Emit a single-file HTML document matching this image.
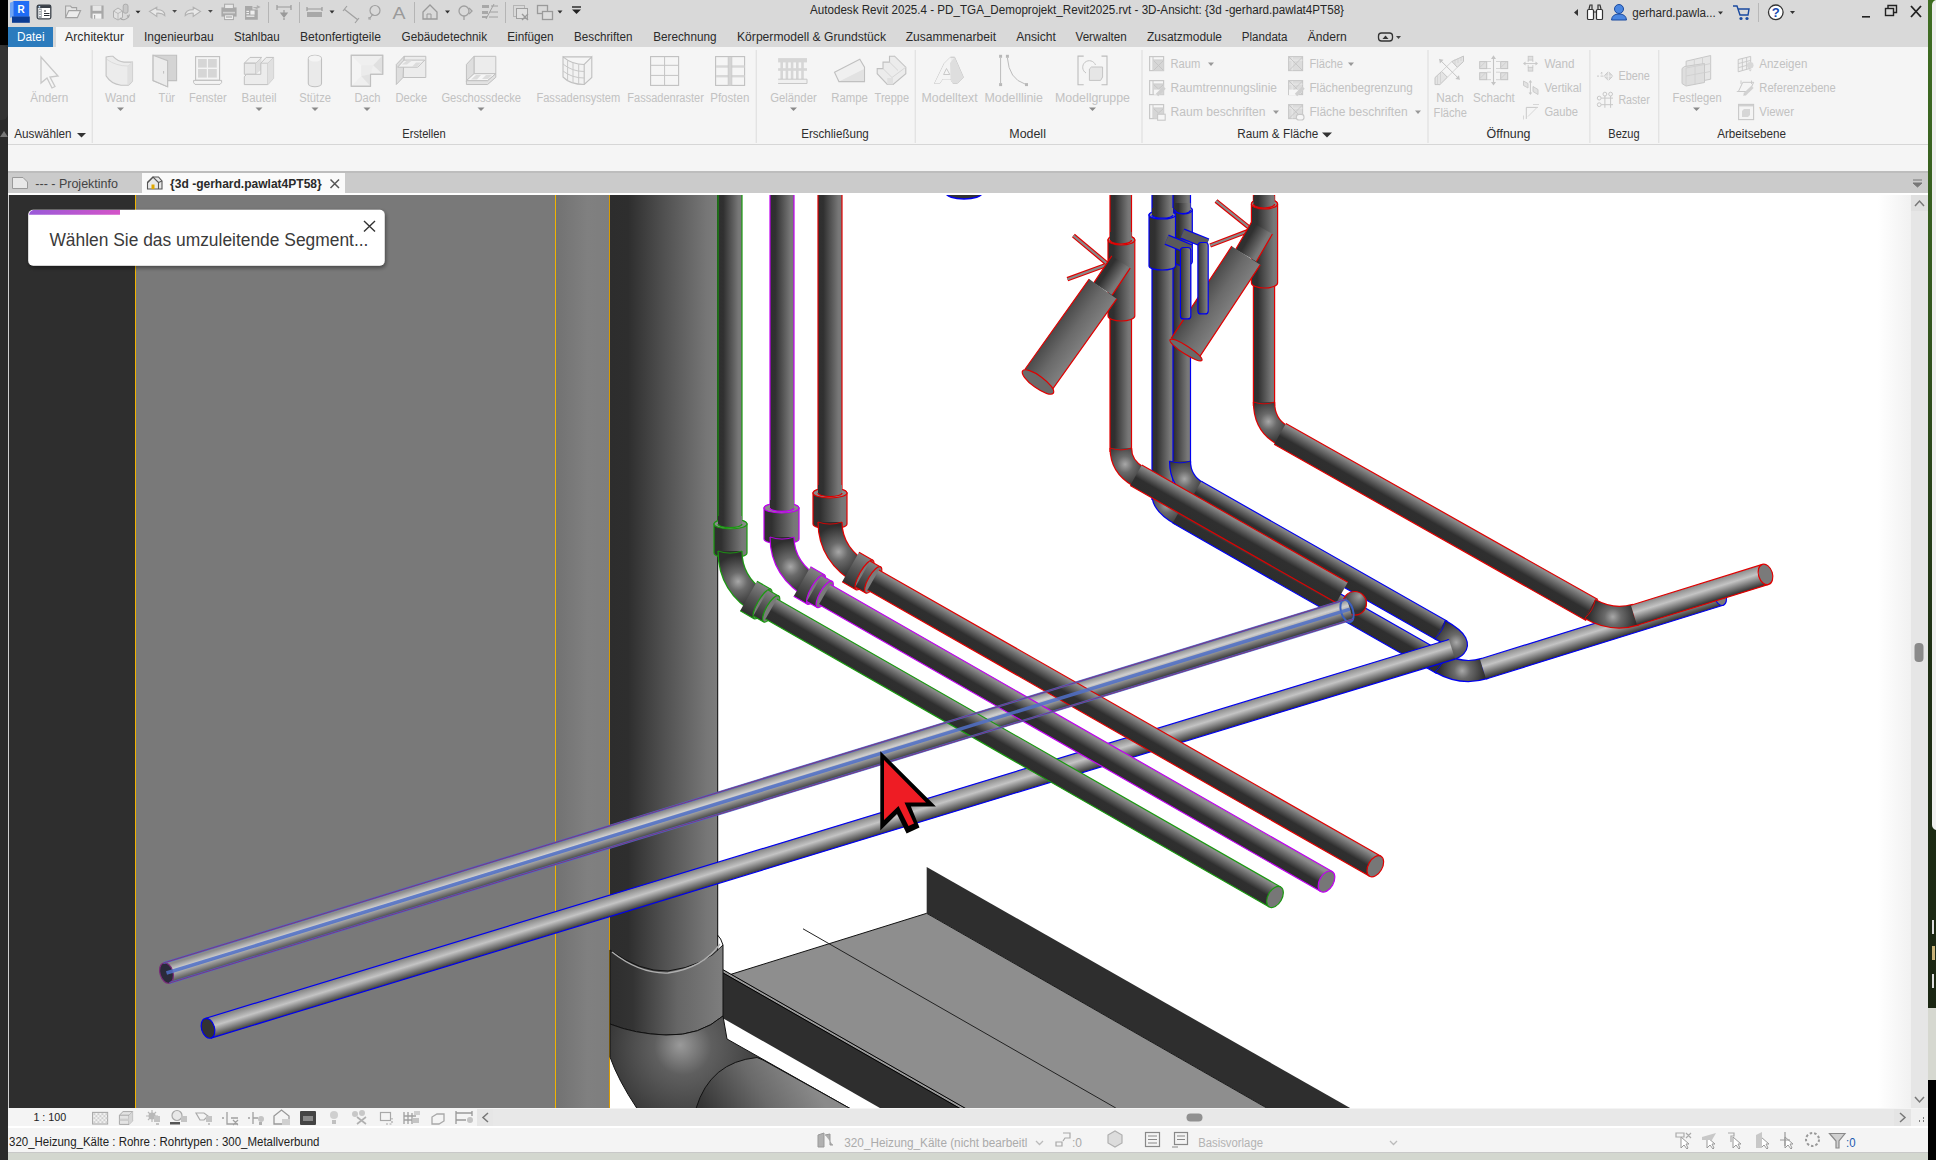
<!DOCTYPE html><html><head><meta charset="utf-8"><title>Revit</title><style>html,body{margin:0;padding:0;width:1936px;height:1160px;overflow:hidden;background:#000;}svg{display:block;font-family:"Liberation Sans",sans-serif;}</style></head><body><svg width="1936" height="1160" viewBox="0 0 1936 1160" font-family="Liberation Sans, sans-serif"><defs><linearGradient id="lg1" gradientUnits="userSpaceOnUse" x1="0.0" y1="0.0" x2="0.0" y2="1080.0"><stop offset="0" stop-color="#3f6e22"/><stop offset="0.3" stop-color="#33561e"/><stop offset="0.6" stop-color="#1f3014"/><stop offset="1" stop-color="#1a2412"/></linearGradient><clipPath id="vp"><rect x="9" y="195" width="1902" height="913"/></clipPath><linearGradient id="lg2" gradientUnits="userSpaceOnUse" x1="1878.0" y1="0.0" x2="1911.0" y2="0.0"><stop offset="0" stop-color="#ffffff"/><stop offset="1" stop-color="#f1f1f1"/></linearGradient><linearGradient id="lg3" gradientUnits="userSpaceOnUse" x1="556.0" y1="0.0" x2="609.0" y2="0.0"><stop offset="0" stop-color="#727272"/><stop offset="0.6" stop-color="#808080"/><stop offset="1" stop-color="#7e7e7e"/></linearGradient><linearGradient id="lg4" gradientUnits="userSpaceOnUse" x1="610.0" y1="0.0" x2="717.0" y2="0.0"><stop offset="0" stop-color="#2d2d2d"/><stop offset="0.17" stop-color="#2e2e2e"/><stop offset="0.5" stop-color="#505050"/><stop offset="0.9" stop-color="#767676"/><stop offset="1" stop-color="#7c7c7c"/></linearGradient><linearGradient id="lg5" gradientUnits="userSpaceOnUse" x1="610.0" y1="0.0" x2="723.0" y2="0.0"><stop offset="0" stop-color="#2e2e2e"/><stop offset="0.2" stop-color="#333333"/><stop offset="0.6" stop-color="#666666"/><stop offset="1" stop-color="#7e7e7e"/></linearGradient><radialGradient id="rg6" gradientUnits="userSpaceOnUse" cx="690.0" cy="1050.0" r="95.0" fx="680.0" fy="1045.0"><stop offset="0" stop-color="#9a9a9a"/><stop offset="0.3" stop-color="#5f5f5f"/><stop offset="1" stop-color="#2e2e2e"/></radialGradient><linearGradient id="lg7" gradientUnits="userSpaceOnUse" x1="700.0" y1="1108.0" x2="790.0" y2="1050.0"><stop offset="0" stop-color="#333333"/><stop offset="0.55" stop-color="#6a6a6a"/><stop offset="1" stop-color="#8a8a8a"/></linearGradient><linearGradient id="lg8" gradientUnits="userSpaceOnUse" x1="1169.5" y1="190.0" x2="1190.5" y2="190.0"><stop offset="0" stop-color="#2f2f2f"/><stop offset="0.22" stop-color="#303030"/><stop offset="0.85" stop-color="#777777"/><stop offset="1" stop-color="#7a7a7a"/></linearGradient><linearGradient id="lg9" gradientUnits="userSpaceOnUse" x1="1152.0" y1="190.0" x2="1173.0" y2="190.0"><stop offset="0" stop-color="#2f2f2f"/><stop offset="0.22" stop-color="#303030"/><stop offset="0.85" stop-color="#777777"/><stop offset="1" stop-color="#7a7a7a"/></linearGradient><linearGradient id="lg10" gradientUnits="userSpaceOnUse" x1="1175.0" y1="0.0" x2="1192.3" y2="0.0"><stop offset="0" stop-color="#2f2f2f"/><stop offset="0.22" stop-color="#303030"/><stop offset="0.85" stop-color="#777777"/><stop offset="1" stop-color="#7a7a7a"/></linearGradient><linearGradient id="lg11" gradientUnits="userSpaceOnUse" x1="1175.0" y1="0.0" x2="1190.5" y2="0.0"><stop offset="0" stop-color="#2f2f2f"/><stop offset="0.22" stop-color="#303030"/><stop offset="0.85" stop-color="#777777"/><stop offset="1" stop-color="#7a7a7a"/></linearGradient><linearGradient id="lg12" gradientUnits="userSpaceOnUse" x1="1149.0" y1="0.0" x2="1175.5" y2="0.0"><stop offset="0" stop-color="#2f2f2f"/><stop offset="0.22" stop-color="#303030"/><stop offset="0.85" stop-color="#777777"/><stop offset="1" stop-color="#7a7a7a"/></linearGradient><linearGradient id="lg13" gradientUnits="userSpaceOnUse" x1="1152.0" y1="0.0" x2="1173.0" y2="0.0"><stop offset="0" stop-color="#2f2f2f"/><stop offset="0.22" stop-color="#303030"/><stop offset="0.85" stop-color="#777777"/><stop offset="1" stop-color="#7a7a7a"/></linearGradient><radialGradient id="rg14" gradientUnits="userSpaceOnUse" cx="1166.9" cy="504.9" r="23.1"><stop offset="0" stop-color="#a8a8a8"/><stop offset="0.35" stop-color="#6a6a6a"/><stop offset="1" stop-color="#2e2e2e"/></radialGradient><linearGradient id="lg15" gradientUnits="userSpaceOnUse" x1="1172.7" y1="523.1" x2="1183.3" y2="504.3"><stop offset="0" stop-color="#2e2e2e"/><stop offset="0.42" stop-color="#2f2f2f"/><stop offset="0.95" stop-color="#8c8c8c"/><stop offset="1" stop-color="#8e8e8e"/></linearGradient><radialGradient id="rg16" gradientUnits="userSpaceOnUse" cx="1462.2" cy="670.7" r="23.1"><stop offset="0" stop-color="#a8a8a8"/><stop offset="0.35" stop-color="#6a6a6a"/><stop offset="1" stop-color="#2e2e2e"/></radialGradient><linearGradient id="lg17" gradientUnits="userSpaceOnUse" x1="1486.1" y1="679.0" x2="1479.9" y2="659.0"><stop offset="0" stop-color="#2e2e2e"/><stop offset="0.38" stop-color="#8a8a8a"/><stop offset="0.62" stop-color="#c4c4c4"/><stop offset="1" stop-color="#8a8a8a"/></linearGradient><radialGradient id="rg18" gradientUnits="userSpaceOnUse" cx="1184.5" cy="479.0" r="23.1"><stop offset="0" stop-color="#a8a8a8"/><stop offset="0.35" stop-color="#6a6a6a"/><stop offset="1" stop-color="#2e2e2e"/></radialGradient><linearGradient id="lg19" gradientUnits="userSpaceOnUse" x1="1190.7" y1="500.1" x2="1201.3" y2="481.3"><stop offset="0" stop-color="#2e2e2e"/><stop offset="0.42" stop-color="#2f2f2f"/><stop offset="0.95" stop-color="#8c8c8c"/><stop offset="1" stop-color="#8e8e8e"/></linearGradient><radialGradient id="rg20" gradientUnits="userSpaceOnUse" cx="1456.3" cy="642.4" r="23.1"><stop offset="0" stop-color="#a8a8a8"/><stop offset="0.35" stop-color="#6a6a6a"/><stop offset="1" stop-color="#2e2e2e"/></radialGradient><linearGradient id="lg21" gradientUnits="userSpaceOnUse" x1="1455.0" y1="659.1" x2="1449.0" y2="639.5"><stop offset="0" stop-color="#2e2e2e"/><stop offset="0.38" stop-color="#8a8a8a"/><stop offset="0.62" stop-color="#c4c4c4"/><stop offset="1" stop-color="#8a8a8a"/></linearGradient><linearGradient id="lg22" gradientUnits="userSpaceOnUse" x1="1110.0" y1="190.0" x2="1131.5" y2="190.0"><stop offset="0" stop-color="#2f2f2f"/><stop offset="0.22" stop-color="#303030"/><stop offset="0.85" stop-color="#777777"/><stop offset="1" stop-color="#7a7a7a"/></linearGradient><linearGradient id="lg23" gradientUnits="userSpaceOnUse" x1="1108.0" y1="0.0" x2="1134.8" y2="0.0"><stop offset="0" stop-color="#2f2f2f"/><stop offset="0.22" stop-color="#303030"/><stop offset="0.85" stop-color="#777777"/><stop offset="1" stop-color="#7a7a7a"/></linearGradient><linearGradient id="lg24" gradientUnits="userSpaceOnUse" x1="1110.0" y1="0.0" x2="1131.5" y2="0.0"><stop offset="0" stop-color="#2f2f2f"/><stop offset="0.22" stop-color="#303030"/><stop offset="0.85" stop-color="#777777"/><stop offset="1" stop-color="#7a7a7a"/></linearGradient><linearGradient id="lg25" gradientUnits="userSpaceOnUse" x1="1111.8" y1="255.9" x2="1130.2" y2="268.1"><stop offset="0" stop-color="#2f2f2f"/><stop offset="0.22" stop-color="#303030"/><stop offset="0.85" stop-color="#777777"/><stop offset="1" stop-color="#7a7a7a"/></linearGradient><linearGradient id="lg26" gradientUnits="userSpaceOnUse" x1="1089.2" y1="279.1" x2="1116.8" y2="298.9"><stop offset="0" stop-color="#4a4a4a"/><stop offset="0.5" stop-color="#6a6a6a"/><stop offset="1" stop-color="#808080"/></linearGradient><radialGradient id="rg27" gradientUnits="userSpaceOnUse" cx="1125.1" cy="464.3" r="23.7"><stop offset="0" stop-color="#a8a8a8"/><stop offset="0.35" stop-color="#6a6a6a"/><stop offset="1" stop-color="#2e2e2e"/></radialGradient><linearGradient id="lg28" gradientUnits="userSpaceOnUse" x1="1130.2" y1="485.4" x2="1141.8" y2="464.9"><stop offset="0" stop-color="#2e2e2e"/><stop offset="0.42" stop-color="#2f2f2f"/><stop offset="0.95" stop-color="#8c8c8c"/><stop offset="1" stop-color="#8e8e8e"/></linearGradient><linearGradient id="lg29" gradientUnits="userSpaceOnUse" x1="1253.4" y1="190.0" x2="1274.6" y2="190.0"><stop offset="0" stop-color="#2f2f2f"/><stop offset="0.22" stop-color="#303030"/><stop offset="0.85" stop-color="#777777"/><stop offset="1" stop-color="#7a7a7a"/></linearGradient><linearGradient id="lg30" gradientUnits="userSpaceOnUse" x1="1251.4" y1="0.0" x2="1277.6" y2="0.0"><stop offset="0" stop-color="#2f2f2f"/><stop offset="0.22" stop-color="#303030"/><stop offset="0.85" stop-color="#777777"/><stop offset="1" stop-color="#7a7a7a"/></linearGradient><linearGradient id="lg31" gradientUnits="userSpaceOnUse" x1="1253.4" y1="0.0" x2="1274.6" y2="0.0"><stop offset="0" stop-color="#2f2f2f"/><stop offset="0.22" stop-color="#303030"/><stop offset="0.85" stop-color="#777777"/><stop offset="1" stop-color="#7a7a7a"/></linearGradient><linearGradient id="lg32" gradientUnits="userSpaceOnUse" x1="1251.6" y1="222.0" x2="1272.4" y2="234.0"><stop offset="0" stop-color="#2f2f2f"/><stop offset="0.22" stop-color="#303030"/><stop offset="0.85" stop-color="#777777"/><stop offset="1" stop-color="#7a7a7a"/></linearGradient><linearGradient id="lg33" gradientUnits="userSpaceOnUse" x1="1231.8" y1="246.2" x2="1260.2" y2="264.8"><stop offset="0" stop-color="#4a4a4a"/><stop offset="0.5" stop-color="#6a6a6a"/><stop offset="1" stop-color="#808080"/></linearGradient><radialGradient id="rg34" gradientUnits="userSpaceOnUse" cx="1268.5" cy="421.6" r="23.3"><stop offset="0" stop-color="#a8a8a8"/><stop offset="0.35" stop-color="#6a6a6a"/><stop offset="1" stop-color="#2e2e2e"/></radialGradient><linearGradient id="lg35" gradientUnits="userSpaceOnUse" x1="1274.1" y1="444.2" x2="1285.9" y2="423.4"><stop offset="0" stop-color="#2e2e2e"/><stop offset="0.42" stop-color="#2f2f2f"/><stop offset="0.95" stop-color="#8c8c8c"/><stop offset="1" stop-color="#8e8e8e"/></linearGradient><radialGradient id="rg36" gradientUnits="userSpaceOnUse" cx="1612.8" cy="616.8" r="23.8"><stop offset="0" stop-color="#a8a8a8"/><stop offset="0.35" stop-color="#6a6a6a"/><stop offset="1" stop-color="#2e2e2e"/></radialGradient><linearGradient id="lg37" gradientUnits="userSpaceOnUse" x1="1637.1" y1="625.2" x2="1630.9" y2="605.2"><stop offset="0" stop-color="#2e2e2e"/><stop offset="0.38" stop-color="#8a8a8a"/><stop offset="0.62" stop-color="#c4c4c4"/><stop offset="1" stop-color="#8a8a8a"/></linearGradient><linearGradient id="lg38" gradientUnits="userSpaceOnUse" x1="1180.4" y1="0.0" x2="1190.8" y2="0.0"><stop offset="0" stop-color="#333"/><stop offset="1" stop-color="#888"/></linearGradient><linearGradient id="lg39" gradientUnits="userSpaceOnUse" x1="1197.9" y1="0.0" x2="1208.2" y2="0.0"><stop offset="0" stop-color="#333"/><stop offset="1" stop-color="#888"/></linearGradient><radialGradient id="rg40" gradientUnits="userSpaceOnUse" cx="1356.0" cy="598.0" r="13.0" fx="1360.0" fy="596.0"><stop offset="0" stop-color="#a0a0a0"/><stop offset="0.5" stop-color="#6a6a6a"/><stop offset="1" stop-color="#333"/></radialGradient><linearGradient id="lg41" gradientUnits="userSpaceOnUse" x1="1353.1" y1="619.2" x2="1346.9" y2="599.2"><stop offset="0" stop-color="#2e2e2e"/><stop offset="0.38" stop-color="#888888"/><stop offset="0.7" stop-color="#cfcfcf"/><stop offset="1" stop-color="#8c8c8c"/></linearGradient><linearGradient id="lg42" gradientUnits="userSpaceOnUse" x1="718.0" y1="190.0" x2="742.0" y2="190.0"><stop offset="0" stop-color="#2f2f2f"/><stop offset="0.22" stop-color="#303030"/><stop offset="0.85" stop-color="#777777"/><stop offset="1" stop-color="#7a7a7a"/></linearGradient><linearGradient id="lg43" gradientUnits="userSpaceOnUse" x1="714.0" y1="0.0" x2="747.0" y2="0.0"><stop offset="0" stop-color="#2f2f2f"/><stop offset="0.22" stop-color="#303030"/><stop offset="0.85" stop-color="#777777"/><stop offset="1" stop-color="#7a7a7a"/></linearGradient><linearGradient id="lg44" gradientUnits="userSpaceOnUse" x1="718.0" y1="0.0" x2="742.0" y2="0.0"><stop offset="0" stop-color="#2f2f2f"/><stop offset="0.22" stop-color="#303030"/><stop offset="0.85" stop-color="#777777"/><stop offset="1" stop-color="#7a7a7a"/></linearGradient><radialGradient id="rg45" gradientUnits="userSpaceOnUse" cx="738.1" cy="581.5" r="26.4"><stop offset="0" stop-color="#a8a8a8"/><stop offset="0.35" stop-color="#6a6a6a"/><stop offset="1" stop-color="#2e2e2e"/></radialGradient><linearGradient id="lg46" gradientUnits="userSpaceOnUse" x1="740.2" y1="610.8" x2="757.0" y2="581.3"><stop offset="0" stop-color="#2e2e2e"/><stop offset="0.5" stop-color="#555"/><stop offset="1" stop-color="#858585"/></linearGradient><linearGradient id="lg47" gradientUnits="userSpaceOnUse" x1="753.3" y1="616.0" x2="768.2" y2="590.0"><stop offset="0" stop-color="#2e2e2e"/><stop offset="0.5" stop-color="#555"/><stop offset="1" stop-color="#858585"/></linearGradient><linearGradient id="lg48" gradientUnits="userSpaceOnUse" x1="765.5" y1="618.9" x2="776.9" y2="599.0"><stop offset="0" stop-color="#2e2e2e"/><stop offset="0.42" stop-color="#2f2f2f"/><stop offset="0.95" stop-color="#8c8c8c"/><stop offset="1" stop-color="#8e8e8e"/></linearGradient><linearGradient id="lg49" gradientUnits="userSpaceOnUse" x1="770.0" y1="190.0" x2="794.0" y2="190.0"><stop offset="0" stop-color="#2f2f2f"/><stop offset="0.22" stop-color="#303030"/><stop offset="0.85" stop-color="#777777"/><stop offset="1" stop-color="#7a7a7a"/></linearGradient><linearGradient id="lg50" gradientUnits="userSpaceOnUse" x1="764.0" y1="0.0" x2="799.0" y2="0.0"><stop offset="0" stop-color="#2f2f2f"/><stop offset="0.22" stop-color="#303030"/><stop offset="0.85" stop-color="#777777"/><stop offset="1" stop-color="#7a7a7a"/></linearGradient><linearGradient id="lg51" gradientUnits="userSpaceOnUse" x1="770.0" y1="0.0" x2="794.0" y2="0.0"><stop offset="0" stop-color="#2f2f2f"/><stop offset="0.22" stop-color="#303030"/><stop offset="0.85" stop-color="#777777"/><stop offset="1" stop-color="#7a7a7a"/></linearGradient><radialGradient id="rg52" gradientUnits="userSpaceOnUse" cx="790.5" cy="566.7" r="26.4"><stop offset="0" stop-color="#a8a8a8"/><stop offset="0.35" stop-color="#6a6a6a"/><stop offset="1" stop-color="#2e2e2e"/></radialGradient><linearGradient id="lg53" gradientUnits="userSpaceOnUse" x1="793.7" y1="596.3" x2="810.5" y2="566.8"><stop offset="0" stop-color="#2e2e2e"/><stop offset="0.5" stop-color="#555"/><stop offset="1" stop-color="#858585"/></linearGradient><linearGradient id="lg54" gradientUnits="userSpaceOnUse" x1="806.8" y1="601.5" x2="821.7" y2="575.5"><stop offset="0" stop-color="#2e2e2e"/><stop offset="0.5" stop-color="#555"/><stop offset="1" stop-color="#858585"/></linearGradient><linearGradient id="lg55" gradientUnits="userSpaceOnUse" x1="818.9" y1="604.4" x2="830.4" y2="584.5"><stop offset="0" stop-color="#2e2e2e"/><stop offset="0.42" stop-color="#2f2f2f"/><stop offset="0.95" stop-color="#8c8c8c"/><stop offset="1" stop-color="#8e8e8e"/></linearGradient><linearGradient id="lg56" gradientUnits="userSpaceOnUse" x1="818.0" y1="190.0" x2="842.0" y2="190.0"><stop offset="0" stop-color="#2f2f2f"/><stop offset="0.22" stop-color="#303030"/><stop offset="0.85" stop-color="#777777"/><stop offset="1" stop-color="#7a7a7a"/></linearGradient><linearGradient id="lg57" gradientUnits="userSpaceOnUse" x1="813.0" y1="0.0" x2="847.0" y2="0.0"><stop offset="0" stop-color="#2f2f2f"/><stop offset="0.22" stop-color="#303030"/><stop offset="0.85" stop-color="#777777"/><stop offset="1" stop-color="#7a7a7a"/></linearGradient><linearGradient id="lg58" gradientUnits="userSpaceOnUse" x1="818.0" y1="0.0" x2="842.0" y2="0.0"><stop offset="0" stop-color="#2f2f2f"/><stop offset="0.22" stop-color="#303030"/><stop offset="0.85" stop-color="#777777"/><stop offset="1" stop-color="#7a7a7a"/></linearGradient><radialGradient id="rg59" gradientUnits="userSpaceOnUse" cx="838.6" cy="551.9" r="26.4"><stop offset="0" stop-color="#a8a8a8"/><stop offset="0.35" stop-color="#6a6a6a"/><stop offset="1" stop-color="#2e2e2e"/></radialGradient><linearGradient id="lg60" gradientUnits="userSpaceOnUse" x1="842.2" y1="581.8" x2="859.0" y2="552.3"><stop offset="0" stop-color="#2e2e2e"/><stop offset="0.5" stop-color="#555"/><stop offset="1" stop-color="#858585"/></linearGradient><linearGradient id="lg61" gradientUnits="userSpaceOnUse" x1="855.3" y1="587.0" x2="870.2" y2="561.0"><stop offset="0" stop-color="#2e2e2e"/><stop offset="0.5" stop-color="#555"/><stop offset="1" stop-color="#858585"/></linearGradient><linearGradient id="lg62" gradientUnits="userSpaceOnUse" x1="867.5" y1="589.9" x2="878.9" y2="570.0"><stop offset="0" stop-color="#2e2e2e"/><stop offset="0.42" stop-color="#2f2f2f"/><stop offset="0.95" stop-color="#8c8c8c"/><stop offset="1" stop-color="#8e8e8e"/></linearGradient><filter id="sh" x="-5%" y="-20%" width="110%" height="150%"><feGaussianBlur in="SourceAlpha" stdDeviation="2"/><feOffset dx="1" dy="2"/><feComponentTransfer><feFuncA type="linear" slope="0.45"/></feComponentTransfer><feMerge><feMergeNode/><feMergeNode in="SourceGraphic"/></feMerge></filter><linearGradient id="lg63" gradientUnits="userSpaceOnUse" x1="29.0" y1="0.0" x2="120.0" y2="0.0"><stop offset="0" stop-color="#9a5ad8"/><stop offset="1" stop-color="#d454c8"/></linearGradient></defs><rect x="0" y="0" width="1936" height="1160" fill="#2b2b2b" />
<rect x="0" y="0" width="9" height="45" fill="#000000" />
<rect x="-6" y="45" width="14" height="75" rx="6" fill="#343434"/>
<path d="M0,137 L4,131 L8,137 Z" fill="#777" stroke="none" stroke-width="1" />
<rect x="1928" y="0" width="8" height="1080" fill="url(#lg1)" />
<rect x="1932" y="0" width="10" height="830" rx="5" fill="#efefef"/>
<rect x="1928" y="1008" width="8" height="72" fill="#d6d8d0" />
<rect x="1928" y="1080" width="8" height="80" fill="#000" />
<rect x="1932" y="920" width="2" height="14" fill="#ddd" />
<rect x="1932" y="946" width="3" height="14" fill="#c9b37a" />
<rect x="1932" y="974" width="2" height="14" fill="#ddd" />
<rect x="0" y="1153" width="1928" height="7" fill="#d3d7cf" />
<rect x="0" y="1153" width="8" height="7" fill="#2b2b2b" />
<g clip-path="url(#vp)">
<rect x="9" y="195" width="1902" height="913" fill="#ffffff" />
<rect x="1878" y="195" width="33" height="913" fill="url(#lg2)" />
<rect x="9" y="195" width="127" height="913" fill="#2e2e2e" />
<rect x="136" y="195" width="420" height="913" fill="#797979" />
<rect x="135" y="195" width="1" height="913" fill="#f0b400" />
<rect x="555" y="195" width="1" height="913" fill="#f0b400" />
<rect x="556" y="195" width="53" height="913" fill="url(#lg3)" />
<rect x="609" y="195" width="1" height="913" fill="#d89a00" />
<path d="M926.7,867 L1351,1108.5 L1267.6,1108.5 L926.7,913.3 Z" fill="#2e2e2e" stroke="none" stroke-width="1" />
<path d="M926.7,913.3 L731,974.3 L965.7,1108.5 L1267.6,1108.5 Z" fill="#8e8e8e" stroke="none" stroke-width="1" />
<path d="M926.7,913.3 L1267.6,1108.5" fill="none" stroke="#1a1a1a" stroke-width="1" />
<path d="M731,974.3 L926.7,913.3" fill="none" stroke="#111" stroke-width="1" />
<path d="M722.5,969.4 L965.7,1108.5 L880.8,1108.5 L722.5,1018 Z" fill="#2e2e2e" stroke="none" stroke-width="1" />
<path d="M722.5,971 L963,1108.5" fill="none" stroke="#9a9a9a" stroke-width="2.2" />
<path d="M722.5,969.4 L965.7,1108.5" fill="none" stroke="#000" stroke-width="1" />
<path d="M722.5,972.6 L960,1108.5" fill="none" stroke="#000" stroke-width="1" />
<path d="M803,928.8 L1115.8,1108" fill="none" stroke="#222" stroke-width="1" />
<rect x="610" y="195" width="107.5" height="800" fill="url(#lg4)" />
<rect x="717.2" y="195" width="1" height="780" fill="#000" />
<path d="M610,950 Q640,972 668,971 Q705,966 723,945 L723,1016 Q700,1036 666,1035 Q635,1034 610,1024 Z" fill="url(#lg5)" stroke="#111" stroke-width="1" />
<path d="M612,952 Q640,974 668,973 Q703,968 720,944" fill="none" stroke="#b0b0b0" stroke-width="1.3" />
<path d="M717.5,935 Q721,938 723,945" fill="none" stroke="#111" stroke-width="1" />
<path d="M610,1024 Q635,1034 666,1035 Q700,1036 723,1016 L727,1039 L850,1108.5 L637,1108.5 Q618,1080 610,1057 Z" fill="url(#rg6)" stroke="#111" stroke-width="1" />
<path d="M696,1108.5 Q710,1062 757,1057.5 L763,1060 L850,1108.5 Z" fill="url(#lg7)" stroke="#111" stroke-width="1" />
<ellipse cx="964" cy="193" rx="18" ry="6" fill="#333" stroke="#0000f0" stroke-width="1.5"/>
<path d="M1169.5,190.0 L1169.5,463.0 L1190.5,463.0 L1190.5,190.0Z" fill="url(#lg8)"/>
<path d="M1169.5,190.0 L1169.5,463.0 M1190.5,190.0 L1190.5,463.0" stroke="#0000f0" stroke-width="1.2" fill="none"/>
<path d="M1152.0,190.0 L1152.0,500.0 L1173.0,500.0 L1173.0,190.0Z" fill="url(#lg9)"/>
<path d="M1152.0,190.0 L1152.0,500.0 M1173.0,190.0 L1173.0,500.0" stroke="#0000f0" stroke-width="1.2" fill="none"/>
<path d="M1175,210 A8.649999999999977,4 0 0 1 1192.3,210 L1192.3,262 A8.649999999999977,4 0 0 1 1175,262 Z" fill="url(#lg10)" stroke="#0000f0" stroke-width="1.2"/>
<ellipse cx="1183.65" cy="210" rx="8.649999999999977" ry="4" fill="#8a8a8a" stroke="#0000f0" stroke-width="1.2"/>
<path d="M1175,203 L1190.5,203 L1190.5,210 A7.75,3.5838150289017436 0 0 1 1175,210 Z" fill="url(#lg11)"/>
<path d="M1190.5,210 A7.75,3.5838150289017436 0 0 1 1175,210" fill="none" stroke="#0000f0" stroke-width="1.2"/>
<path d="M1149,215 A13.25,4 0 0 1 1175.5,215 L1175.5,266 A13.25,4 0 0 1 1149,266 Z" fill="url(#lg12)" stroke="#0000f0" stroke-width="1.2"/>
<ellipse cx="1162.25" cy="215" rx="13.25" ry="4" fill="#8a8a8a" stroke="#0000f0" stroke-width="1.2"/>
<path d="M1152,208 L1173,208 L1173,215 A10.5,3.169811320754717 0 0 1 1152,215 Z" fill="url(#lg13)"/>
<path d="M1173,215 A10.5,3.169811320754717 0 0 1 1152,215" fill="none" stroke="#0000f0" stroke-width="1.2"/>
<path d="M1162.5,495.0 Q1162.5,504.9 1180.0,514.8" stroke="#0000f0" stroke-width="22.2" fill="none"/>
<path d="M1162.5,495.0 Q1162.5,504.9 1180.0,514.8" stroke="url(#rg14)" stroke-width="19.8" fill="none"/>
<path d="M1152.0,495.0 Q1162.5,498.7 1173.0,495.0" stroke="#0000f0" stroke-width="0.9" fill="none"/>
<path d="M1185.2,505.7 Q1183.2,516.7 1174.8,524.0" stroke="#0000f0" stroke-width="0.9" fill="none"/>
<path d="M1172.7,523.1 L1436.7,673.6 L1447.3,654.8 L1183.3,504.3Z" fill="url(#lg15)"/>
<path d="M1172.7,523.1 L1436.7,673.6 M1183.3,504.3 L1447.3,654.8" stroke="#0000f0" stroke-width="1.2" fill="none"/>
<path d="M1440.0,663.0 Q1462.0,675.6 1485.0,668.4" stroke="#0000f0" stroke-width="22.2" fill="none"/>
<path d="M1440.0,663.0 Q1462.0,675.6 1485.0,668.4" stroke="url(#rg16)" stroke-width="19.8" fill="none"/>
<path d="M1434.8,672.2 Q1443.2,664.9 1445.2,653.9" stroke="#0000f0" stroke-width="0.9" fill="none"/>
<path d="M1481.9,658.4 Q1481.5,669.5 1488.1,678.4" stroke="#0000f0" stroke-width="0.9" fill="none"/>
<path d="M1486.1,679.0 L1723.1,605.3 L1716.9,585.3 L1479.9,659.0Z" fill="url(#lg17)"/>
<path d="M1486.1,679.0 L1723.1,605.3 M1479.9,659.0 L1716.9,585.3" stroke="#0000f0" stroke-width="1.2" fill="none"/>
<ellipse cx="1720.0" cy="595.3" rx="6.0" ry="10.5" transform="rotate(-17.3 1720.0 595.3)" fill="#7a7a7a" stroke="#0000f0" stroke-width="1.2"/>
<path d="M1180.0,461.0 Q1180.0,481.6 1198.0,491.8" stroke="#0000f0" stroke-width="22.2" fill="none"/>
<path d="M1180.0,461.0 Q1180.0,481.6 1198.0,491.8" stroke="url(#rg18)" stroke-width="19.8" fill="none"/>
<path d="M1169.5,461.0 Q1180.0,464.7 1190.5,461.0" stroke="#0000f0" stroke-width="0.9" fill="none"/>
<path d="M1203.2,482.7 Q1201.2,493.7 1192.8,501.0" stroke="#0000f0" stroke-width="0.9" fill="none"/>
<path d="M1190.7,500.1 L1436.7,640.0 L1447.3,621.2 L1201.3,481.3Z" fill="url(#lg19)"/>
<path d="M1190.7,500.1 L1436.7,640.0 M1201.3,481.3 L1447.3,621.2" stroke="#0000f0" stroke-width="1.2" fill="none"/>
<path d="M1440.0,629.5 Q1467.6,645.2 1450.0,649.6" stroke="#0000f0" stroke-width="22.2" fill="none"/>
<path d="M1440.0,629.5 Q1467.6,645.2 1450.0,649.6" stroke="url(#rg20)" stroke-width="19.8" fill="none"/>
<path d="M1434.8,638.6 Q1443.2,631.3 1445.2,620.4" stroke="#0000f0" stroke-width="0.9" fill="none"/>
<path d="M1452.5,659.8 Q1446.4,650.5 1447.5,639.4" stroke="#0000f0" stroke-width="0.9" fill="none"/>
<path d="M1455.0,659.1 L211.0,1038.1 L205.0,1018.5 L1449.0,639.5Z" fill="url(#lg21)"/>
<path d="M1455.0,659.1 L211.0,1038.1 M1449.0,639.5 L205.0,1018.5" stroke="#0000f0" stroke-width="1.2" fill="none"/>
<ellipse cx="208.0" cy="1028.3" rx="6.5" ry="10.2" transform="rotate(163.1 208.0 1028.3)" fill="#333" stroke="#0000f0" stroke-width="1.2"/>
<path d="M1110.0,190.0 L1110.0,452.0 L1131.5,452.0 L1131.5,190.0Z" fill="url(#lg22)"/>
<path d="M1110.0,190.0 L1110.0,452.0 M1131.5,190.0 L1131.5,452.0" stroke="#e00000" stroke-width="1.2" fill="none"/>
<path d="M1108,240 A13.399999999999977,5 0 0 1 1134.8,240 L1134.8,316 A13.399999999999977,5 0 0 1 1108,316 Z" fill="url(#lg23)" stroke="#e00000" stroke-width="1.2"/>
<ellipse cx="1121.4" cy="240" rx="13.399999999999977" ry="5" fill="#8a8a8a" stroke="#e00000" stroke-width="1.2"/>
<path d="M1110,232 L1131.5,232 L1131.5,240 A10.75,4.011194029850753 0 0 1 1110,240 Z" fill="url(#lg24)"/>
<path d="M1131.5,240 A10.75,4.011194029850753 0 0 1 1110,240" fill="none" stroke="#e00000" stroke-width="1.2"/>
<path d="M1073.4,235.6 L1108,264.4 M1067.4,279.2 L1108,264.4" fill="none" stroke="#e00000" stroke-width="4.5" />
<path d="M1073.4,235.6 L1108,264.4 M1067.4,279.2 L1108,264.4" fill="none" stroke="#8a8a8a" stroke-width="2.2" />
<path d="M1111.8,255.9 L1093.8,282.9 L1112.2,295.1 L1130.2,268.1Z" fill="url(#lg25)"/>
<path d="M1111.8,255.9 L1093.8,282.9 M1130.2,268.1 L1112.2,295.1" stroke="#e00000" stroke-width="1.2" fill="none"/>
<path d="M1089.2,279.1 L1024.8,369.5 L1052.4,389.3 L1116.8,298.9Z" fill="url(#lg26)"/>
<path d="M1089.2,279.1 L1024.8,369.5 M1116.8,298.9 L1052.4,389.3" stroke="#e00000" stroke-width="1.2" fill="none"/>
<ellipse cx="1038" cy="382" rx="6" ry="19" transform="rotate(-54 1038 382)" fill="#6a6a6a" stroke="#e00000" stroke-width="1.2"/>
<path d="M1120.8,448.0 Q1120.8,466.4 1138.0,476.3" stroke="#e00000" stroke-width="22.7" fill="none"/>
<path d="M1120.8,448.0 Q1120.8,466.4 1138.0,476.3" stroke="url(#rg27)" stroke-width="20.3" fill="none"/>
<path d="M1110.0,448.0 Q1120.8,451.8 1131.5,448.0" stroke="#e00000" stroke-width="0.9" fill="none"/>
<path d="M1143.3,466.9 Q1141.3,478.1 1132.7,485.6" stroke="#e00000" stroke-width="0.9" fill="none"/>
<path d="M1130.2,485.4 L1336.2,602.8 L1347.8,582.3 L1141.8,464.9Z" fill="url(#lg28)"/>
<path d="M1130.2,485.4 L1336.2,602.8 M1141.8,464.9 L1347.8,582.3" stroke="#e00000" stroke-width="1.2" fill="none"/>
<path d="M1253.4,190.0 L1253.4,406.0 L1274.6,406.0 L1274.6,190.0Z" fill="url(#lg29)"/>
<path d="M1253.4,190.0 L1253.4,406.0 M1274.6,190.0 L1274.6,406.0" stroke="#e00000" stroke-width="1.2" fill="none"/>
<path d="M1251.4,204 A13.099999999999909,5 0 0 1 1277.6,204 L1277.6,283 A13.099999999999909,5 0 0 1 1251.4,283 Z" fill="url(#lg30)" stroke="#e00000" stroke-width="1.2"/>
<ellipse cx="1264.5" cy="204" rx="13.099999999999909" ry="5" fill="#8a8a8a" stroke="#e00000" stroke-width="1.2"/>
<path d="M1253.4,196 L1274.6,196 L1274.6,204 A10.599999999999909,4.0458015267175504 0 0 1 1253.4,204 Z" fill="url(#lg31)"/>
<path d="M1274.6,204 A10.599999999999909,4.0458015267175504 0 0 1 1253.4,204" fill="none" stroke="#e00000" stroke-width="1.2"/>
<path d="M1216,200.9 L1251.8,229.7 M1210.2,245.5 L1251.8,229.7" fill="none" stroke="#e00000" stroke-width="4.5" />
<path d="M1216,200.9 L1251.8,229.7 M1210.2,245.5 L1251.8,229.7" fill="none" stroke="#8a8a8a" stroke-width="2.2" />
<path d="M1251.6,222.0 L1235.6,249.5 L1256.4,261.5 L1272.4,234.0Z" fill="url(#lg32)"/>
<path d="M1251.6,222.0 L1235.6,249.5 M1272.4,234.0 L1256.4,261.5" stroke="#e00000" stroke-width="1.2" fill="none"/>
<path d="M1231.8,246.2 L1171.2,338.3 L1199.6,356.9 L1260.2,264.8Z" fill="url(#lg33)"/>
<path d="M1231.8,246.2 L1171.2,338.3 M1260.2,264.8 L1199.6,356.9" stroke="#e00000" stroke-width="1.2" fill="none"/>
<ellipse cx="1186" cy="350" rx="4" ry="19" transform="rotate(-57 1186 350)" fill="#6a6a6a" stroke="#e00000" stroke-width="1.2"/>
<path d="M1264.0,402.0 Q1264.0,424.8 1282.0,434.9" stroke="#e00000" stroke-width="22.4" fill="none"/>
<path d="M1264.0,402.0 Q1264.0,424.8 1282.0,434.9" stroke="url(#rg34)" stroke-width="20.0" fill="none"/>
<path d="M1253.4,402.0 Q1264.0,405.7 1274.6,402.0" stroke="#e00000" stroke-width="0.9" fill="none"/>
<path d="M1287.2,425.7 Q1285.2,436.8 1276.8,444.2" stroke="#e00000" stroke-width="0.9" fill="none"/>
<path d="M1274.1,444.2 L1586.1,620.5 L1597.9,599.6 L1285.9,423.4Z" fill="url(#lg35)"/>
<path d="M1274.1,444.2 L1586.1,620.5 M1285.9,423.4 L1597.9,599.6" stroke="#e00000" stroke-width="1.2" fill="none"/>
<path d="M1590.0,609.0 Q1612.7,621.8 1636.0,614.6" stroke="#e00000" stroke-width="22.8" fill="none"/>
<path d="M1590.0,609.0 Q1612.7,621.8 1636.0,614.6" stroke="url(#rg36)" stroke-width="20.4" fill="none"/>
<path d="M1584.7,618.3 Q1593.3,610.8 1595.3,599.6" stroke="#e00000" stroke-width="0.9" fill="none"/>
<path d="M1632.8,604.3 Q1632.4,615.7 1639.2,624.9" stroke="#e00000" stroke-width="0.9" fill="none"/>
<path d="M1637.1,625.2 L1768.6,584.4 L1762.4,564.4 L1630.9,605.2Z" fill="url(#lg37)"/>
<path d="M1637.1,625.2 L1768.6,584.4 M1630.9,605.2 L1762.4,564.4" stroke="#e00000" stroke-width="1.2" fill="none"/>
<ellipse cx="1765.5" cy="574.4" rx="7.0" ry="10.5" transform="rotate(-17.2 1765.5 574.4)" fill="#7a7a7a" stroke="#e00000" stroke-width="1.2"/>
<path d="M1166.6,239.6 L1190.4,249.5" fill="none" stroke="#0000f0" stroke-width="11" />
<path d="M1166.6,239.6 L1190.4,249.5" fill="none" stroke="#5a5a5a" stroke-width="8.5" />
<rect x="1180.4" y="247.5" width="10.399999999999864" height="71.39999999999998" fill="url(#lg38)" stroke="#0000f0" stroke-width="1.2" rx="3"/>
<path d="M1182.4,233.6 L1207.2,243.5" fill="none" stroke="#0000f0" stroke-width="11" />
<path d="M1182.4,233.6 L1207.2,243.5" fill="none" stroke="#5a5a5a" stroke-width="8.5" />
<rect x="1197.9" y="242.5" width="10.299999999999955" height="71.39999999999998" fill="url(#lg39)" stroke="#0000f0" stroke-width="1.2" rx="3"/>
<circle cx="1354.7" cy="603.3" r="11.8" fill="url(#rg40)" stroke="#e00000" stroke-width="1.2"/>
<path d="M1353.1,619.2 L169.6,983.0 L163.4,963.0 L1346.9,599.2Z" fill="url(#lg41)"/>
<path d="M1353.1,619.2 L169.6,983.0 M1346.9,599.2 L163.4,963.0" stroke="#7a2a7a" stroke-width="1.2" fill="none"/>
<ellipse cx="166.5" cy="973.0" rx="6.5" ry="10.5" transform="rotate(162.9 166.5 973.0)" fill="#2a2a3a" stroke="#7a2a7a" stroke-width="1.2"/>
<ellipse cx="1347" cy="611" rx="6" ry="11.5" transform="rotate(-17.1 1347 611)" fill="none" stroke="#3a5fc0" stroke-width="2"/>
<path d="M718.0,190.0 L718.0,551.0 L742.0,551.0 L742.0,190.0Z" fill="url(#lg42)"/>
<path d="M718.0,190.0 L718.0,551.0 M742.0,190.0 L742.0,551.0" stroke="#1a9a10" stroke-width="1.2" fill="none"/>
<path d="M714,524 A16.5,5 0 0 1 747,524 L747,553 A16.5,5 0 0 1 714,553 Z" fill="url(#lg43)" stroke="#1a9a10" stroke-width="1.2"/>
<ellipse cx="730.5" cy="524" rx="16.5" ry="5" fill="#8a8a8a" stroke="#1a9a10" stroke-width="1.2"/>
<path d="M718,516 L742,516 L742,524 A12.0,3.6363636363636362 0 0 1 718,524 Z" fill="url(#lg44)"/>
<path d="M742,524 A12.0,3.6363636363636362 0 0 1 718,524" fill="none" stroke="#1a9a10" stroke-width="1.2"/>
<path d="M730.0,551.0 Q730.0,585.4 762.5,604.0" stroke="#1a9a10" stroke-width="25.2" fill="none"/>
<path d="M730.0,551.0 Q730.0,585.4 762.5,604.0" stroke="url(#rg45)" stroke-width="22.8" fill="none"/>
<path d="M718.0,551.0 Q730.0,555.2 742.0,551.0" stroke="#1a9a10" stroke-width="0.9" fill="none"/>
<path d="M768.4,593.6 Q766.1,606.1 756.5,614.4" stroke="#1a9a10" stroke-width="0.9" fill="none"/>
<path d="M740.2,610.8 L754.0,618.7 L770.9,589.2 L757.0,581.3Z" fill="url(#lg46)"/>
<path d="M740.2,610.8 L754.0,618.7 M757.0,581.3 L770.9,589.2" stroke="#1a9a10" stroke-width="1.2" fill="none"/>
<ellipse cx="762.5" cy="604.0" rx="5" ry="17" transform="rotate(29.7 762.5 604.0)" fill="#7a7a7a" stroke="#1a9a10" stroke-width="1.2"/>
<path d="M753.3,616.0 L763.7,622.0 L778.6,595.9 L768.2,590.0Z" fill="url(#lg47)"/>
<path d="M753.3,616.0 L763.7,622.0 M768.2,590.0 L778.6,595.9" stroke="#1a9a10" stroke-width="1.2" fill="none"/>
<ellipse cx="771.2" cy="608.9" rx="5" ry="15" transform="rotate(29.7 771.2 608.9)" fill="#7a7a7a" stroke="#1a9a10" stroke-width="1.2"/>
<path d="M765.5,618.9 L1269.3,907.0 L1280.7,887.0 L776.9,599.0Z" fill="url(#lg48)"/>
<path d="M765.5,618.9 L1269.3,907.0 M776.9,599.0 L1280.7,887.0" stroke="#1a9a10" stroke-width="1.2" fill="none"/>
<ellipse cx="1275.0" cy="897.0" rx="7.0" ry="11.5" transform="rotate(29.8 1275.0 897.0)" fill="#777" stroke="#1a9a10" stroke-width="1.2"/>
<path d="M770.0,190.0 L770.0,537.0 L794.0,537.0 L794.0,190.0Z" fill="url(#lg49)"/>
<path d="M770.0,190.0 L770.0,537.0 M794.0,190.0 L794.0,537.0" stroke="#c000f0" stroke-width="1.2" fill="none"/>
<path d="M764,508 A17.5,5 0 0 1 799,508 L799,539 A17.5,5 0 0 1 764,539 Z" fill="url(#lg50)" stroke="#c000f0" stroke-width="1.2"/>
<ellipse cx="781.5" cy="508" rx="17.5" ry="5" fill="#8a8a8a" stroke="#c000f0" stroke-width="1.2"/>
<path d="M770,500 L794,500 L794,508 A12.0,3.4285714285714284 0 0 1 770,508 Z" fill="url(#lg51)"/>
<path d="M794,508 A12.0,3.4285714285714284 0 0 1 770,508" fill="none" stroke="#c000f0" stroke-width="1.2"/>
<path d="M782.0,537.0 Q782.0,570.1 816.0,589.5" stroke="#c000f0" stroke-width="25.2" fill="none"/>
<path d="M782.0,537.0 Q782.0,570.1 816.0,589.5" stroke="url(#rg52)" stroke-width="22.8" fill="none"/>
<path d="M770.0,537.0 Q782.0,541.2 794.0,537.0" stroke="#c000f0" stroke-width="0.9" fill="none"/>
<path d="M821.9,579.1 Q819.6,591.6 810.0,599.9" stroke="#c000f0" stroke-width="0.9" fill="none"/>
<path d="M793.7,596.3 L807.5,604.2 L824.4,574.7 L810.5,566.8Z" fill="url(#lg53)"/>
<path d="M793.7,596.3 L807.5,604.2 M810.5,566.8 L824.4,574.7" stroke="#c000f0" stroke-width="1.2" fill="none"/>
<ellipse cx="816.0" cy="589.5" rx="5" ry="17" transform="rotate(29.7 816.0 589.5)" fill="#7a7a7a" stroke="#c000f0" stroke-width="1.2"/>
<path d="M806.8,601.5 L817.2,607.5 L832.1,581.4 L821.7,575.5Z" fill="url(#lg54)"/>
<path d="M806.8,601.5 L817.2,607.5 M821.7,575.5 L832.1,581.4" stroke="#c000f0" stroke-width="1.2" fill="none"/>
<ellipse cx="824.7" cy="594.4" rx="5" ry="15" transform="rotate(29.7 824.7 594.4)" fill="#7a7a7a" stroke="#c000f0" stroke-width="1.2"/>
<path d="M818.9,604.4 L1320.8,891.6 L1332.2,871.6 L830.4,584.5Z" fill="url(#lg55)"/>
<path d="M818.9,604.4 L1320.8,891.6 M830.4,584.5 L1332.2,871.6" stroke="#c000f0" stroke-width="1.2" fill="none"/>
<ellipse cx="1326.5" cy="881.6" rx="7.0" ry="11.5" transform="rotate(29.8 1326.5 881.6)" fill="#777" stroke="#c000f0" stroke-width="1.2"/>
<path d="M818.0,190.0 L818.0,522.0 L842.0,522.0 L842.0,190.0Z" fill="url(#lg56)"/>
<path d="M818.0,190.0 L818.0,522.0 M842.0,190.0 L842.0,522.0" stroke="#e00000" stroke-width="1.2" fill="none"/>
<path d="M813,493 A17.0,5 0 0 1 847,493 L847,524 A17.0,5 0 0 1 813,524 Z" fill="url(#lg57)" stroke="#e00000" stroke-width="1.2"/>
<ellipse cx="830.0" cy="493" rx="17.0" ry="5" fill="#8a8a8a" stroke="#e00000" stroke-width="1.2"/>
<path d="M818,485 L842,485 L842,493 A12.0,3.5294117647058822 0 0 1 818,493 Z" fill="url(#lg58)"/>
<path d="M842,493 A12.0,3.5294117647058822 0 0 1 818,493" fill="none" stroke="#e00000" stroke-width="1.2"/>
<path d="M830.0,522.0 Q830.0,555.3 864.5,575.0" stroke="#e00000" stroke-width="25.2" fill="none"/>
<path d="M830.0,522.0 Q830.0,555.3 864.5,575.0" stroke="url(#rg59)" stroke-width="22.8" fill="none"/>
<path d="M818.0,522.0 Q830.0,526.2 842.0,522.0" stroke="#e00000" stroke-width="0.9" fill="none"/>
<path d="M870.4,564.6 Q868.1,577.1 858.5,585.4" stroke="#e00000" stroke-width="0.9" fill="none"/>
<path d="M842.2,581.8 L856.0,589.7 L872.9,560.2 L859.0,552.3Z" fill="url(#lg60)"/>
<path d="M842.2,581.8 L856.0,589.7 M859.0,552.3 L872.9,560.2" stroke="#e00000" stroke-width="1.2" fill="none"/>
<ellipse cx="864.5" cy="575.0" rx="5" ry="17" transform="rotate(29.7 864.5 575.0)" fill="#7a7a7a" stroke="#e00000" stroke-width="1.2"/>
<path d="M855.3,587.0 L865.7,593.0 L880.6,566.9 L870.2,561.0Z" fill="url(#lg61)"/>
<path d="M855.3,587.0 L865.7,593.0 M870.2,561.0 L880.6,566.9" stroke="#e00000" stroke-width="1.2" fill="none"/>
<ellipse cx="873.2" cy="579.9" rx="5" ry="15" transform="rotate(29.7 873.2 579.9)" fill="#7a7a7a" stroke="#e00000" stroke-width="1.2"/>
<path d="M867.5,589.9 L1369.6,876.3 L1381.0,856.3 L878.9,570.0Z" fill="url(#lg62)"/>
<path d="M867.5,589.9 L1369.6,876.3 M878.9,570.0 L1381.0,856.3" stroke="#e00000" stroke-width="1.2" fill="none"/>
<ellipse cx="1375.3" cy="866.3" rx="7.0" ry="11.5" transform="rotate(29.7 1375.3 866.3)" fill="#777" stroke="#e00000" stroke-width="1.2"/>
<path d="M163.4,963.0 L1346.9,599.2" stroke="#4a6ad0" stroke-width="2.2" opacity="0.85"/>
<path d="M169.6,983.0 L1353.1,619.2" stroke="#4a6ad0" stroke-width="2.2" opacity="0.85"/>
<path d="M166.5,973.0 L1350.0,609.2" stroke="#5070c8" stroke-width="3.5" opacity="0.85"/>
<path d="M163.4,963.0 L1346.9,599.2" stroke="#8a2a6a" stroke-width="0.8" opacity="0.9"/>
<path d="M169.6,983.0 L1353.1,619.2" stroke="#8a2a6a" stroke-width="0.8" opacity="0.9"/>
</g>
<rect x="8" y="195" width="1" height="913" fill="#d0d0d0" />
<rect x="8" y="0" width="1920" height="47" fill="#d9d9d9" />
<rect x="8" y="27" width="45" height="20" fill="#2b7bbd" />
<text x="17.0" y="41.3" font-size="12" fill="#ffffff" textLength="27.5" lengthAdjust="spacingAndGlyphs">Datei</text>
<rect x="56" y="27" width="77" height="20" fill="#f5f5f5" />
<text x="65.0" y="41.0" font-size="12" fill="#2b2b2b" textLength="59.0" lengthAdjust="spacingAndGlyphs">Architektur</text>
<text x="144.0" y="41.0" font-size="12" fill="#2b2b2b" textLength="69.7" lengthAdjust="spacingAndGlyphs">Ingenieurbau</text>
<text x="234.0" y="41.0" font-size="12" fill="#2b2b2b" textLength="45.7" lengthAdjust="spacingAndGlyphs">Stahlbau</text>
<text x="300.0" y="41.0" font-size="12" fill="#2b2b2b" textLength="81.0" lengthAdjust="spacingAndGlyphs">Betonfertigteile</text>
<text x="401.6" y="41.0" font-size="12" fill="#2b2b2b" textLength="85.5" lengthAdjust="spacingAndGlyphs">Gebäudetechnik</text>
<text x="507.2" y="41.0" font-size="12" fill="#2b2b2b" textLength="46.4" lengthAdjust="spacingAndGlyphs">Einfügen</text>
<text x="574.1" y="41.0" font-size="12" fill="#2b2b2b" textLength="58.3" lengthAdjust="spacingAndGlyphs">Beschriften</text>
<text x="653.2" y="41.0" font-size="12" fill="#2b2b2b" textLength="63.3" lengthAdjust="spacingAndGlyphs">Berechnung</text>
<text x="737.0" y="41.0" font-size="12" fill="#2b2b2b" textLength="149.0" lengthAdjust="spacingAndGlyphs">Körpermodell &amp; Grundstück</text>
<text x="905.7" y="41.0" font-size="12" fill="#2b2b2b" textLength="90.3" lengthAdjust="spacingAndGlyphs">Zusammenarbeit</text>
<text x="1016.2" y="41.0" font-size="12" fill="#2b2b2b" textLength="39.6" lengthAdjust="spacingAndGlyphs">Ansicht</text>
<text x="1075.5" y="41.0" font-size="12" fill="#2b2b2b" textLength="51.2" lengthAdjust="spacingAndGlyphs">Verwalten</text>
<text x="1147.0" y="41.0" font-size="12" fill="#2b2b2b" textLength="75.0" lengthAdjust="spacingAndGlyphs">Zusatzmodule</text>
<text x="1241.8" y="41.0" font-size="12" fill="#2b2b2b" textLength="45.7" lengthAdjust="spacingAndGlyphs">Plandata</text>
<text x="1307.8" y="41.0" font-size="12" fill="#2b2b2b" textLength="39.0" lengthAdjust="spacingAndGlyphs">Ändern</text>
<rect x="1378.5" y="33" width="14" height="8" rx="3" fill="none" stroke="#333" stroke-width="1.3"/>
<path d="M1382.5,39 L1385.5,35.5 L1388.5,39 Z" fill="#333" stroke="none" stroke-width="1" />
<path d="M1396,36 L1401,36 L1398.5,39 Z" fill="#444" stroke="none" stroke-width="1" />
<text x="810.0" y="13.9" font-size="12.5" fill="#262626" textLength="534.0" lengthAdjust="spacingAndGlyphs">Autodesk Revit 2025.4 - PD_TGA_Demoprojekt_Revit2025.rvt - 3D-Ansicht: {3d -gerhard.pawlat4PT58}</text>
<path d="M10,2.7 L13.6,1.2 L13.6,17 L10,17.8 Z" fill="#6ea4f4" stroke="none" stroke-width="1" />
<path d="M13.4,1 L29.2,1 L29.2,16.8 L13.4,16.8 Z" fill="#1f6cf5" stroke="none" stroke-width="1" />
<path d="M12,16.5 L29.8,16.5 L29.8,22.8 L12,22.8 Z" fill="#0b3c94" stroke="none" stroke-width="1" />
<text x="17.4" y="13.3" font-size="10.8" fill="#ffffff" font-weight="bold" textLength="7.2" lengthAdjust="spacingAndGlyphs">R</text>
<rect x="37.2" y="5.2" width="13.6" height="13.6" rx="1.5" fill="#ffffff" stroke="#3a4048" stroke-width="1.3"/>
<rect x="37.2" y="5.2" width="13.6" height="2.8" fill="#3a4048" />
<rect x="38.6" y="6" width="1.6" height="1.6" fill="#bfe0ff" />
<rect x="38.4" y="8.5" width="3.4" height="9.6" fill="#a0a6ac" />
<path d="M39,10.5 L41,10.5 M39,13 L41,13 M39,15.5 L41,15.5" fill="none" stroke="#fff" stroke-width="0.9" />
<path d="M44,11 L46,11 M44,13.5 L49.5,13.5 M44,15.5 L49.5,15.5" fill="none" stroke="#2a2f36" stroke-width="1" />
<path d="M65.6,17.6 L65.6,6 L70.5,6 L72,7.6 L76.6,7.6 L76.6,10.6" fill="#e4e4e4" stroke="#a2a2a2" stroke-width="1.1" />
<path d="M65.6,17.6 L68.8,10.6 L80.6,10.6 L77.4,17.6 Z" fill="#ececec" stroke="#a2a2a2" stroke-width="1.1" />
<path d="M90.4,5.4 L103.6,5.4 L103.6,18.8 L91.8,18.8 L90.4,17.4 Z" fill="#a8a8a8" stroke="none" stroke-width="1" />
<rect x="92.6" y="5.6" width="8.8" height="5.2" fill="#e6e6e6" />
<rect x="92.6" y="13.6" width="8.8" height="5.2" fill="#f2f2f2" />
<rect x="94" y="15" width="1.2" height="3.8" fill="#a8a8a8" />
<path d="M113.5,11 L118,8 L122.5,11 L122.5,17.5 L118,20 L113.5,17.5 Z" fill="#e2e2e2" stroke="#b0b0b0" stroke-width="1" />
<path d="M113.5,11 L118,13.5 L122.5,11 M118,13.5 L118,20" fill="none" stroke="#b8b8b8" stroke-width="0.9" />
<rect x="123.2" y="4.2" width="4.8" height="9" rx="2" fill="#c8c8c8" stroke="#a8a8a8" stroke-width="0.9"/>
<path d="M120,18 Q124,22 128.5,17 M127,15.5 L128.6,16.8 L129.5,14.5" fill="none" stroke="#a8a8a8" stroke-width="1.1" />
<path d="M135.5,10.8 L140.5,10.8 L138,13.6 Z" fill="#2a2a2a" stroke="none" stroke-width="1" />
<path d="M149.4,11.4 L156.8,7.2 L156.8,9.6 Q164.8,9.6 164.8,15.6 Q162,12.8 156.8,13.2 L156.8,16.4 Z" fill="#e8e8e8" stroke="#b2b2b2" stroke-width="1.1" />
<path d="M172.2,10 L177,10 L174.6,12.8 Z" fill="#4a4a4a" stroke="none" stroke-width="1" />
<path d="M200.6,11.4 L193.2,7.2 L193.2,9.6 Q185.2,9.6 185.2,15.6 Q188,12.8 193.2,13.2 L193.2,16.4 Z" fill="#e8e8e8" stroke="#b2b2b2" stroke-width="1.1" />
<path d="M208,10 L212.8,10 L210.4,12.8 Z" fill="#4a4a4a" stroke="none" stroke-width="1" />
<path d="M221.4,7.4 L236.6,7.4 L236.6,16.6 L221.4,16.6 Z" fill="#a8a8a8" stroke="none" stroke-width="1" />
<rect x="223" y="11.8" width="12" height="1.6" fill="#d0d0d0" />
<rect x="224.6" y="4.2" width="8.8" height="4.4" fill="#e8e8e8" stroke="#a8a8a8" stroke-width="1"/>
<rect x="224.6" y="14.8" width="8.8" height="4.8" fill="#f0f0f0" stroke="#a8a8a8" stroke-width="1"/>
<rect x="226" y="16" width="6" height="2" fill="#c4c4c4" />
<path d="M245,6 L252.4,6 L252.4,9.4 L257.8,9.4 L257.8,19.8 L245,19.8 Z" fill="#a8a8a8" stroke="none" stroke-width="1" />
<rect x="246.4" y="10.8" width="2.6" height="1.2" fill="#eee" />
<rect x="246.4" y="13" width="2.6" height="1.2" fill="#eee" />
<rect x="246.4" y="15.6" width="8" height="1.2" fill="#eee" />
<rect x="250.4" y="10.6" width="4.2" height="4" fill="#eee" />
<path d="M252.4,7 L256.8,7 L256.8,5 L260.6,7 L256.8,9 Z" fill="#b0b0b0" stroke="none" stroke-width="1" />
<rect x="268" y="2" width="1" height="21" fill="#b5b5b5" />
<path d="M277,7 L291,7 M277,5 L277,10 M291,5 L291,10 M284,10 L284,20 M281,13 L287,13 L284,17 Z" fill="#9a9a9a" stroke="#9a9a9a" stroke-width="1.2" />
<rect x="299" y="2" width="1" height="21" fill="#b5b5b5" />
<path d="M307,9 L322,9 M307,7 L307,11 M322,7 L322,11" fill="none" stroke="#9a9a9a" stroke-width="1.2" />
<rect x="307" y="12" width="15" height="5" fill="#a8a8a8" />
<path d="M329.5,10.5 L334.5,10.5 L332,13.5 Z" fill="#333" stroke="none" stroke-width="1" />
<path d="M344,9 L358,20 M343,11 L347,6 M355,23 L359,18" fill="none" stroke="#a0a0a0" stroke-width="1.2" />
<circle cx="375" cy="10.5" r="5" fill="none" stroke="#a0a0a0" stroke-width="1.2"/>
<path d="M369,17 L369,19 L371,19 M370,18 L373,14" fill="none" stroke="#a0a0a0" stroke-width="1.2" />
<text x="392.5" y="19.0" font-size="16" fill="#9a9a9a" textLength="13.0" lengthAdjust="spacingAndGlyphs">A</text>
<rect x="414" y="2" width="1" height="21" fill="#b5b5b5" />
<path d="M423,12 L430,5 L437,12 L437,19 L423,19 Z" fill="none" stroke="#9a9a9a" stroke-width="1.3" />
<path d="M427,19 L427,14 L431,14 L431,19" fill="none" stroke="#9a9a9a" stroke-width="1" />
<path d="M445,10.5 L450,10.5 L447.5,13.5 Z" fill="#333" stroke="none" stroke-width="1" />
<circle cx="464" cy="11" r="5" fill="none" stroke="#a0a0a0" stroke-width="1.3"/>
<path d="M464,16 L464,20 M469,8 L472,11 L469,14" fill="none" stroke="#a0a0a0" stroke-width="1.3" />
<rect x="482" y="5" width="7" height="3" fill="#a8a8a8" />
<rect x="482" y="11" width="6" height="3" fill="#a8a8a8" />
<rect x="482" y="16" width="5" height="2" fill="#a8a8a8" />
<path d="M491,6 L498,6 M490,12 L498,12 M489,17 L498,17 M494,4 L486,19" fill="none" stroke="#a0a0a0" stroke-width="1" />
<rect x="505" y="2" width="1" height="21" fill="#b5b5b5" />
<rect x="513.5" y="5.5" width="11" height="11" fill="none" stroke="#b5b5b5" stroke-width="1"/>
<rect x="516.5" y="8.5" width="11" height="10" fill="#e0e0e0" stroke="#a0a0a0" stroke-width="1"/>
<path d="M522,14 L528,20 M528,14 L522,20" fill="none" stroke="#9a9a9a" stroke-width="1.4" />
<rect x="537.5" y="5.5" width="10" height="8" fill="none" stroke="#9a9a9a" stroke-width="1.3"/>
<rect x="542.5" y="11.5" width="10" height="8" fill="#ddd" stroke="#9a9a9a" stroke-width="1.3"/>
<path d="M557.5,10.5 L562.5,10.5 L560,13.5 Z" fill="#333" stroke="none" stroke-width="1" />
<path d="M572,7 L581,7" fill="none" stroke="#222" stroke-width="1.4" />
<path d="M572,9.5 L581,9.5 L576.5,14 Z" fill="#222" stroke="none" stroke-width="1" />
<path d="M1578,9 L1574,12.5 L1578,16 Z" fill="#333" stroke="none" stroke-width="1" />
<rect x="1587.5" y="9.5" width="6" height="10" rx="1" fill="#fff" stroke="#333" stroke-width="1.2"/>
<rect x="1596.5" y="9.5" width="6" height="10" rx="1" fill="#fff" stroke="#333" stroke-width="1.2"/>
<path d="M1589,9 L1590,5 L1592,5 L1592,9 M1598,9 L1598,5 L1600,5 L1601,9 M1593,12 L1597,12" fill="none" stroke="#333" stroke-width="1.2" />
<circle cx="1619" cy="9" r="4.5" fill="#4a86e0" stroke="#1a4aa0" stroke-width="1"/>
<path d="M1611.5,20 Q1612,14 1619,14 Q1626,14 1626.5,20 Z" fill="#4a86e0" stroke="#1a4aa0" stroke-width="1" />
<text x="1632.2" y="17.0" font-size="12.5" fill="#2a2a2a" textLength="83.6" lengthAdjust="spacingAndGlyphs">gerhard.pawla...</text>
<path d="M1718,11.5 L1723,11.5 L1720.5,14.5 Z" fill="#333" stroke="none" stroke-width="1" />
<path d="M1733,6 L1737,6 L1740,15 L1748,15 L1749,9 L1738,9" fill="none" stroke="#1a4aa0" stroke-width="1.4" />
<circle cx="1741" cy="18.5" r="1.6" fill="#1a4aa0"/><circle cx="1747" cy="18.5" r="1.6" fill="#1a4aa0"/>
<rect x="1758" y="3" width="1" height="19" fill="#b8b8b8" />
<circle cx="1775.8" cy="12.3" r="7.3" fill="#fff" stroke="#333" stroke-width="1.3"/>
<text x="1771.8" y="17.0" font-size="12" fill="#1a4ab0" font-weight="bold" textLength="8.0" lengthAdjust="spacingAndGlyphs">?</text>
<path d="M1790,11 L1795,11 L1792.5,14 Z" fill="#333" stroke="none" stroke-width="1" />
<rect x="1862" y="16" width="8" height="1.6" fill="#222" />
<rect x="1885.5" y="8.5" width="8" height="7" fill="none" stroke="#222" stroke-width="1.4"/>
<path d="M1888,8 L1888,5.5 L1896.5,5.5 L1896.5,12.5 L1894,12.5" fill="none" stroke="#222" stroke-width="1.4" />
<path d="M1911,6 L1921,17 M1921,6 L1911,17" fill="none" stroke="#222" stroke-width="1.8" />
<rect x="8" y="47" width="1920" height="97" fill="#f5f5f5" />
<rect x="8" y="144" width="1920" height="1" fill="#d6d6d6" />
<rect x="8" y="145" width="1920" height="26" fill="#f5f5f5" />
<rect x="91.7" y="50" width="1" height="93" fill="#dcdcdc" />
<rect x="755.7" y="50" width="1" height="93" fill="#dcdcdc" />
<rect x="914.7" y="50" width="1" height="93" fill="#dcdcdc" />
<rect x="1141.5" y="50" width="1" height="93" fill="#dcdcdc" />
<rect x="1427.5" y="50" width="1" height="93" fill="#dcdcdc" />
<rect x="1589.4" y="50" width="1" height="93" fill="#dcdcdc" />
<rect x="1658.3" y="50" width="1" height="93" fill="#dcdcdc" />
<path d="M41,57 L41,83 L47,78 L52,88 L55,86.5 L50,77 L58,76 Z" fill="none" stroke="#c8c8c8" stroke-width="1.3" />
<text x="30.3" y="102.2" font-size="12" fill="#c2c2c2" textLength="38.0" lengthAdjust="spacingAndGlyphs">Ändern</text>
<text x="14.2" y="138.0" font-size="12" fill="#2e2e2e" textLength="57.4" lengthAdjust="spacingAndGlyphs">Auswählen</text>
<path d="M77,133 L86,133 L81.5,137.5 Z" fill="#333" stroke="none" stroke-width="1" />
<path d="M106.1,57.1 Q109,56 113,56.3 Q118,61.5 124,62.1 L132.5,62.1 L132.5,80.9 Q130,84 128.2,85.3 L121,85.3 Q111,84 106.1,75.9 Z" fill="#ececec" stroke="#c4c4c4" stroke-width="1.1" />
<path d="M107,59.5 Q116,66 128,66 L132.5,62.1 M128,66 L128,85" fill="none" stroke="#dcdcdc" stroke-width="1" />
<path d="M128,66 L132.5,62.1 L132.5,80.9 L128.2,85.3 Z" fill="#e0e0e0" stroke="none" stroke-width="1" />
<text x="105.0" y="102.2" font-size="12" fill="#c2c2c2" textLength="30.5" lengthAdjust="spacingAndGlyphs">Wand</text>
<path d="M117.0,107.5 L124.0,107.5 L120.5,111 Z" fill="#8a8a8a" stroke="none" stroke-width="1" />
<path d="M153.1,55.3 L176.6,55.3 L176.6,80.6 L167.6,80.6 L167.6,86.7 L153.1,80.6 Z" fill="#d4d4d4" stroke="#c0c0c0" stroke-width="1.1" />
<path d="M153.1,55.3 L167.6,60.7 L167.6,86.7 L153.1,80.6 Z" fill="#ececec" stroke="#c0c0c0" stroke-width="1.1" />
<rect x="163.2" y="71" width="0.9" height="2.6" fill="#b8b8b8" />
<text x="158.4" y="102.2" font-size="12" fill="#c2c2c2" textLength="16.6" lengthAdjust="spacingAndGlyphs">Tür</text>
<rect x="195.6" y="56.6" width="24" height="23.6" fill="#f4f4f4" stroke="#c0c0c0" stroke-width="1.1"/>
<rect x="198" y="59" width="8.8" height="8.6" fill="#d6d6d6" />
<rect x="208" y="59" width="8.8" height="8.6" fill="#d6d6d6" />
<rect x="198" y="69" width="8.8" height="8.6" fill="#d6d6d6" />
<rect x="208" y="69" width="8.8" height="8.6" fill="#d6d6d6" />
<path d="M193.6,80.4 L221.6,80.4 L221.6,82.6 L220,84.4 L195,84.4 L193.6,82.6 Z" fill="#f4f4f4" stroke="#c0c0c0" stroke-width="1" />
<text x="189.0" y="102.2" font-size="12" fill="#c2c2c2" textLength="37.6" lengthAdjust="spacingAndGlyphs">Fenster</text>
<path d="M244.3,63.2 L250,57.4 L261.6,57.4 L255.8,63.2 Z" fill="#f0f0f0" stroke="#c0c0c0" stroke-width="1" />
<path d="M244.3,63.2 L255.8,63.2 L255.8,74.3 L244.3,74.3 Z" fill="#e8e8e8" stroke="#c0c0c0" stroke-width="1" />
<path d="M255.8,63.2 L261.6,57.4 L261,70 L255.8,74.3 Z" fill="#dedede" stroke="none" stroke-width="1" />
<path d="M244.3,76.8 L246.5,74.3 L260.8,74.3 L260.8,63.2 L266.2,57.4 L273.6,57.4 L273.6,78.4 L267.8,84.6 L244.3,84.6 Z" fill="#ececec" stroke="#c0c0c0" stroke-width="1" />
<path d="M260.8,63.2 L267.8,63.2 L273.6,57.4 M267.8,63.2 L267.8,84.6" fill="none" stroke="#c8c8c8" stroke-width="1" />
<path d="M267.8,63.2 L273.6,57.4 L273.6,78.4 L267.8,84.6 Z" fill="#e0e0e0" stroke="none" stroke-width="1" />
<text x="241.5" y="102.2" font-size="12" fill="#c2c2c2" textLength="35.1" lengthAdjust="spacingAndGlyphs">Bauteil</text>
<path d="M255.5,107.5 L262.5,107.5 L259,111 Z" fill="#8a8a8a" stroke="none" stroke-width="1" />
<path d="M308.3,58.6 A6.6,3.3 0 0 1 321.5,58.6 L321.5,83.4 A6.6,3.3 0 0 1 308.3,83.4 Z" fill="#eaeaea" stroke="#c0c0c0" stroke-width="1.1" />
<ellipse cx="314.9" cy="58.6" rx="6.2" ry="3" fill="#f4f4f4"/>
<text x="299.3" y="102.2" font-size="12" fill="#c2c2c2" textLength="31.7" lengthAdjust="spacingAndGlyphs">Stütze</text>
<path d="M311.5,107.5 L318.5,107.5 L315,111 Z" fill="#8a8a8a" stroke="none" stroke-width="1" />
<path d="M351.3,55.3 L382.7,55.3 L382.7,74.3 L370.5,74.3 L370.5,86.3 L351.3,86.3 Z" fill="#efefef" stroke="#c0c0c0" stroke-width="1.1" />
<path d="M382.7,55.3 L373.2,65.2 L382.7,74.3 Z" fill="#e0e0e0" stroke="none" stroke-width="1" />
<path d="M361.2,65.2 L361.2,76 L351.3,86.3 L351.3,55.3 Z" fill="#f4f4f4" stroke="none" stroke-width="1" />
<path d="M361.2,65.2 L373.2,65.2 L370.5,74.3 L361.2,76 Z" fill="#ebebeb" stroke="none" stroke-width="1" />
<path d="M361.2,76 L370.5,86.3 L370.5,74.3 Z" fill="#e2e2e2" stroke="none" stroke-width="1" />
<path d="M351.3,55.3 L382.7,55.3 L382.7,74.3 L370.5,74.3 L370.5,86.3 L351.3,86.3 Z" fill="none" stroke="#c0c0c0" stroke-width="1.1" />
<path d="M363.5,107.5 L370.5,107.5 L367,111 Z" fill="#8a8a8a" stroke="none" stroke-width="1" />
<text x="354.5" y="102.2" font-size="12" fill="#c2c2c2" textLength="26.0" lengthAdjust="spacingAndGlyphs">Dach</text>
<path d="M404.1,56.3 L425.8,56.3 L425.8,77.5 L403,77.5 Z" fill="#ececec" stroke="#c0c0c0" stroke-width="1" />
<path d="M396.3,64.5 L404.1,56.3 L403,77.5 L396.3,84.5 Z" fill="#dedede" stroke="#c0c0c0" stroke-width="1" />
<path d="M397.6,67.2 L404.1,60.1 L424.7,60.1 L417.7,67.2 Z" fill="#f2f2f2" stroke="#c0c0c0" stroke-width="1" />
<path d="M402,64.5 L407,60.5 L412,60.5 L407,64.5 Z M412,66.8 L416,62.6 L421,62.6 L417,66.8 Z" fill="#dcdcdc" stroke="none" stroke-width="1" />
<text x="395.5" y="102.2" font-size="12" fill="#c2c2c2" textLength="31.6" lengthAdjust="spacingAndGlyphs">Decke</text>
<path d="M474,56.3 L495.8,56.3 L495.8,73.7 L474,73.7 Z" fill="#ececec" stroke="#c0c0c0" stroke-width="1" />
<path d="M466.4,64.5 L474,56.3 L474,73.7 L466.4,81.3 Z" fill="#dedede" stroke="#c0c0c0" stroke-width="1" />
<path d="M466.4,80.7 L474,73.7 L495.8,73.7 L487.6,80.7 Z" fill="#f6f6f6" stroke="#c0c0c0" stroke-width="1" />
<path d="M466.4,80.7 L487.6,80.7 L495.8,73.7 L495.8,77.3 L487.6,84.5 L466.4,84.5 Z" fill="#e2e2e2" stroke="#c0c0c0" stroke-width="1" />
<path d="M476,75 L481,75 L477,79.5 L471,79.5 Z M486,75 L492,75 L488,79 L482,79 Z" fill="#dcdcdc" stroke="none" stroke-width="1" />
<text x="441.4" y="102.2" font-size="12" fill="#c2c2c2" textLength="79.7" lengthAdjust="spacingAndGlyphs">Geschossdecke</text>
<path d="M477.5,107.5 L484.5,107.5 L481,111 Z" fill="#8a8a8a" stroke="none" stroke-width="1" />
<path d="M563,56.9 Q572,64.5 584.2,64.5 L591.8,56.9 L591.8,77.5 L584.2,84.5 Q570,84.5 563,77 Z" fill="#f2f2f2" stroke="#c0c0c0" stroke-width="1.1" />
<path d="M563,56.9 L591.8,56.9 M584.2,64.5 L584.2,84.5" fill="none" stroke="#c0c0c0" stroke-width="1.1" />
<path d="M567.6,60.5 L567.6,80.5 M573,63 L573,83 M578.7,64.2 L578.7,84.3 M563,64 Q572,71.5 584.2,71.5 M563,71 Q572,78 584.2,78" fill="none" stroke="#c8c8c8" stroke-width="1" />
<text x="536.4" y="102.2" font-size="12" fill="#c2c2c2" textLength="83.9" lengthAdjust="spacingAndGlyphs">Fassadensystem</text>
<rect x="650.6" y="56.6" width="28" height="28.8" fill="none" stroke="#c0c0c0" stroke-width="1.1"/>
<path d="M664.6,57 L664.6,85.5 M651,65.3 L678.5,65.3 M651,75.4 L678.5,75.4" fill="none" stroke="#c4c4c4" stroke-width="1" />
<text x="627.3" y="102.2" font-size="12" fill="#c2c2c2" textLength="76.5" lengthAdjust="spacingAndGlyphs">Fassadenraster</text>
<rect x="715.6" y="56.6" width="29" height="28.8" fill="none" stroke="#c0c0c0" stroke-width="1.1"/>
<rect x="716" y="65.3" width="28.5" height="2.4" fill="#d8d8d8" />
<rect x="716" y="75" width="28.5" height="2.4" fill="#d8d8d8" />
<rect x="728.2" y="57" width="3.6" height="28.5" fill="#d4d4d4" />
<path d="M728.2,57 L728.2,85.5 M731.8,57 L731.8,85.5" fill="none" stroke="#c8c8c8" stroke-width="0.8" />
<text x="710.2" y="102.2" font-size="12" fill="#c2c2c2" textLength="39.2" lengthAdjust="spacingAndGlyphs">Pfosten</text>
<text x="402.3" y="138.0" font-size="12" fill="#2e2e2e" textLength="43.4" lengthAdjust="spacingAndGlyphs">Erstellen</text>
<rect x="778.1" y="58.1" width="28.9" height="4.3" fill="#d6d6d6" />
<rect x="778.1" y="68.2" width="28.9" height="2.6" fill="#d6d6d6" />
<rect x="780.4" y="62" width="2.6" height="17.5" fill="#d6d6d6" />
<rect x="785.6" y="62" width="2.6" height="17.5" fill="#d6d6d6" />
<rect x="790.8" y="62" width="2.6" height="17.5" fill="#d6d6d6" />
<rect x="796" y="62" width="2.6" height="17.5" fill="#d6d6d6" />
<rect x="801.2" y="62" width="2.6" height="17.5" fill="#d6d6d6" />
<path d="M778.1,79.2 L807,79.2 L807,83.5 L778.1,83.5" fill="#f0f0f0" stroke="#c8c8c8" stroke-width="1" />
<text x="770.2" y="102.2" font-size="12" fill="#c2c2c2" textLength="46.5" lengthAdjust="spacingAndGlyphs">Geländer</text>
<path d="M790.0,107.5 L797.0,107.5 L793.5,111 Z" fill="#8a8a8a" stroke="none" stroke-width="1" />
<path d="M834.5,72.2 L859.8,59.2 L864.5,67.2 L864.5,81.6 L838.9,81.6 Z" fill="#f0f0f0" stroke="#c0c0c0" stroke-width="1.1" />
<path d="M840,81 L864,69 L864,81 Z" fill="#e2e2e2" stroke="none" stroke-width="1" />
<text x="831.2" y="102.2" font-size="12" fill="#c2c2c2" textLength="36.6" lengthAdjust="spacingAndGlyphs">Rampe</text>
<path d="M877.2,68.6 L883,68.6 L883,62.1 L889.5,62.1 L889.5,56.3 L894.6,56.3 L905.8,67.2 L905.8,73.7 L893.1,84.5 L887.3,84.5 L877.2,73.7 Z" fill="#ececec" stroke="#c0c0c0" stroke-width="1.1" />
<path d="M883,68.6 L892,77.5 L905.8,67.2 M889.5,62.1 L898,70.5 M894.6,56.3 L905.8,67.2" fill="none" stroke="#d6d6d6" stroke-width="1" />
<path d="M887.3,84.5 L887.3,78 L893,78 L893,84.5 Z" fill="#e0e0e0" stroke="none" stroke-width="1" />
<text x="874.6" y="102.2" font-size="12" fill="#c2c2c2" textLength="34.4" lengthAdjust="spacingAndGlyphs">Treppe</text>
<text x="801.2" y="138.0" font-size="12" fill="#2e2e2e" textLength="67.6" lengthAdjust="spacingAndGlyphs">Erschließung</text>
<path d="M934.5,83.5 L944.3,63.4 L950.5,57.2 L954.6,57.2 L963.4,77.3 L957.2,83.5 L953.1,83.5 L950.5,78.9 L942.7,78.9 L939.6,83.5 Z" fill="#ececec" stroke="#c4c4c4" stroke-width="1" />
<path d="M950.5,57.2 L944.3,63.4 L934.5,83.5 L939.6,83.5 L942.7,78.9 L950.5,78.9 L953.1,83.5 Z" fill="#f4f4f4" stroke="none" stroke-width="1" />
<path d="M954.6,57.2 L963.4,77.3 L957.2,83.5 L953.1,83.5 L950.5,78.9 L950,63 Z" fill="#dedede" stroke="none" stroke-width="1" />
<path d="M943.6,74.5 L946.5,68.5 L949.8,74.5 Z" fill="#f5f5f5" stroke="#c4c4c4" stroke-width="0.9" />
<text x="921.5" y="102.2" font-size="12" fill="#c2c2c2" textLength="56.2" lengthAdjust="spacingAndGlyphs">Modelltext</text>
<rect x="999.1" y="54.8" width="3" height="3" fill="#b8b8b8" />
<rect x="1005.9" y="54.8" width="3" height="3" fill="#b8b8b8" />
<rect x="999.1" y="83.1" width="3" height="3" fill="#b8b8b8" />
<rect x="1025" y="83.1" width="3" height="3" fill="#b8b8b8" />
<path d="M1000.6,58 L1000.6,83 M1007.4,58 Q1009,79 1025,84" fill="none" stroke="#bcbcbc" stroke-width="1" />
<text x="984.5" y="102.2" font-size="12" fill="#c2c2c2" textLength="58.5" lengthAdjust="spacingAndGlyphs">Modelllinie</text>
<path d="M1083.7,56.1 L1078,56.1 L1078,84.8 L1083.7,84.8 M1101.5,56.1 L1107,56.1 L1107,84.8 L1101.5,84.8" fill="none" stroke="#bcbcbc" stroke-width="1.1" />
<path d="M1086,73 A6.6,6.6 0 1 1 1095.5,65" fill="none" stroke="#c4c4c4" stroke-width="1" />
<path d="M1089.4,69 L1091.5,67 L1102.6,67 L1102.6,77 L1100.6,80.4 L1089.4,80.4 Z" fill="#e6e6e6" stroke="#c4c4c4" stroke-width="1" />
<text x="1055.0" y="102.2" font-size="12" fill="#c2c2c2" textLength="75.0" lengthAdjust="spacingAndGlyphs">Modellgruppe</text>
<path d="M1089.0,107.5 L1096.0,107.5 L1092.5,111 Z" fill="#8a8a8a" stroke="none" stroke-width="1" />
<text x="1009.3" y="138.0" font-size="12" fill="#2e2e2e" textLength="36.6" lengthAdjust="spacingAndGlyphs">Modell</text>
<rect x="1149.6" y="56.6" width="14" height="14" fill="#f6f6f6" stroke="#c8c8c8" stroke-width="1.2"/>
<rect x="1153.4" y="60.2" width="10.2" height="10.4" fill="#d6d6d6" />
<path d="M1153,56 L1153,71 M1153,60 L1164,60" fill="none" stroke="#c8c8c8" stroke-width="1" />
<path d="M1154,61 L1163,70 M1163,61 L1154,70" fill="none" stroke="#c4c4c4" stroke-width="0.9" />
<rect x="1288.6" y="56.6" width="14" height="14" fill="#dcdcdc" stroke="#c8c8c8" stroke-width="1.1"/>
<path d="M1292.2,57 L1292.2,70.5 M1289,60.2 L1302.5,60.2" fill="none" stroke="#e8e8e8" stroke-width="1" />
<path d="M1289,57 L1302.5,70.5 M1302.5,57 L1289,70.5" fill="none" stroke="#c4c4c4" stroke-width="0.9" />
<rect x="1149.6" y="80.6" width="14" height="14" fill="#f6f6f6" stroke="#c8c8c8" stroke-width="1.2"/>
<rect x="1153.4" y="84.2" width="10.2" height="10.4" fill="#d6d6d6" />
<path d="M1153,80 L1153,95 M1153,84 L1164,84" fill="none" stroke="#c8c8c8" stroke-width="1" />
<path d="M1154,85 L1158.5,89 L1163,85" fill="none" stroke="#c4c4c4" stroke-width="0.9" />
<rect x="1154" y="89.6" width="6" height="5" fill="#f6f6f6" />
<path d="M1157,95 L1164.5,87.5" fill="none" stroke="#d0d0d0" stroke-width="3.4" />
<rect x="1288.6" y="80.6" width="14" height="14" fill="#dcdcdc" stroke="#c8c8c8" stroke-width="1.1"/>
<path d="M1292.2,81 L1292.2,94.5 M1289,84.2 L1302.5,84.2" fill="none" stroke="#e8e8e8" stroke-width="1" />
<path d="M1289,81 L1302.5,94.5 M1302.5,81 L1289,94.5" fill="none" stroke="#c4c4c4" stroke-width="0.9" />
<rect x="1289" y="89.6" width="9.5" height="5.4" fill="#f6f6f6" />
<path d="M1296,95 L1303.5,87.5" fill="none" stroke="#d0d0d0" stroke-width="3.4" />
<rect x="1149.6" y="104.6" width="14" height="14" fill="#f6f6f6" stroke="#c8c8c8" stroke-width="1.2"/>
<rect x="1153.4" y="108.2" width="10.2" height="10.4" fill="#d6d6d6" />
<path d="M1153,104 L1153,119 M1153,108 L1164,108" fill="none" stroke="#c8c8c8" stroke-width="1" />
<path d="M1154,109 L1158.5,113 L1163,109" fill="none" stroke="#c4c4c4" stroke-width="0.9" />
<rect x="1157.6" y="114.2" width="7.6" height="6" fill="#f6f6f6" stroke="#c8c8c8" stroke-width="1.1"/>
<rect x="1288.6" y="104.6" width="14" height="14" fill="#dcdcdc" stroke="#c8c8c8" stroke-width="1.1"/>
<path d="M1292.2,105 L1292.2,118.5 M1289,108.2 L1302.5,108.2" fill="none" stroke="#e8e8e8" stroke-width="1" />
<path d="M1289,105 L1302.5,118.5 M1302.5,105 L1289,118.5" fill="none" stroke="#c4c4c4" stroke-width="0.9" />
<rect x="1296.4" y="114.4" width="7.6" height="5.6" rx="2.6" fill="#f6f6f6" stroke="#c8c8c8" stroke-width="1.1"/>
<text x="1170.5" y="68.0" font-size="12" fill="#c2c2c2" textLength="29.9" lengthAdjust="spacingAndGlyphs">Raum</text>
<path d="M1208,62.5 L1214,62.5 L1211,66 Z" fill="#999" stroke="none" stroke-width="1" />
<text x="1170.5" y="92.0" font-size="12" fill="#c2c2c2" textLength="106.5" lengthAdjust="spacingAndGlyphs">Raumtrennungslinie</text>
<text x="1170.5" y="116.0" font-size="12" fill="#c2c2c2" textLength="95.0" lengthAdjust="spacingAndGlyphs">Raum  beschriften</text>
<path d="M1273,110.5 L1279,110.5 L1276,114 Z" fill="#999" stroke="none" stroke-width="1" />
<text x="1309.4" y="68.0" font-size="12" fill="#c2c2c2" textLength="33.6" lengthAdjust="spacingAndGlyphs">Fläche</text>
<path d="M1348,62.5 L1354,62.5 L1351,66 Z" fill="#999" stroke="none" stroke-width="1" />
<text x="1309.4" y="92.0" font-size="12" fill="#c2c2c2" textLength="103.3" lengthAdjust="spacingAndGlyphs">Flächenbegrenzung</text>
<text x="1309.4" y="116.0" font-size="12" fill="#c2c2c2" textLength="98.2" lengthAdjust="spacingAndGlyphs">Fläche  beschriften</text>
<path d="M1415,110.5 L1421,110.5 L1418,114 Z" fill="#999" stroke="none" stroke-width="1" />
<text x="1237.3" y="137.7" font-size="12" fill="#2e2e2e" textLength="80.9" lengthAdjust="spacingAndGlyphs">Raum &amp; Fläche</text>
<path d="M1322,132.5 L1332,132.5 L1327,137.5 Z" fill="#333" stroke="none" stroke-width="1" />
<path d="M1463.5,56.1 L1463.5,61.5 L1457.3,67.3 L1451.9,61.5 Z" fill="#e4e4e4" stroke="#c4c4c4" stroke-width="1" />
<path d="M1435,77.6 L1441.6,71.4 L1447.4,77.2 L1439.9,84.6 L1435,84.6 Z" fill="#e4e4e4" stroke="#c4c4c4" stroke-width="1" />
<path d="M1455,59 L1455,64.5 M1458,58 L1458,63 M1461,57 L1461,61 M1437.5,76 L1437.5,84 M1440.5,73 L1440.5,83" fill="none" stroke="#cfcfcf" stroke-width="0.8" />
<path d="M1441.6,71.4 L1451.9,61.5 M1447.4,77.2 L1457.3,67.3" fill="none" stroke="#d0d0d0" stroke-width="0.9" />
<path d="M1439.6,59.5 L1459.4,79.2" fill="none" stroke="#c4c4c4" stroke-width="1" />
<path d="M1439.1,59 L1443.5,59.8 L1439.9,63.4 Z M1459.8,79.7 L1455.4,78.9 L1459,75.3 Z" fill="#c4c4c4" stroke="none" stroke-width="1" />
<text x="1436.3" y="101.5" font-size="12" fill="#c2c2c2" textLength="27.4" lengthAdjust="spacingAndGlyphs">Nach</text>
<text x="1433.6" y="116.7" font-size="12" fill="#c2c2c2" textLength="33.4" lengthAdjust="spacingAndGlyphs">Fläche</text>
<rect x="1479.7" y="61.6" width="7" height="7" fill="#e0e0e0" stroke="#c4c4c4" stroke-width="1"/>
<path d="M1480.2,67.1 L1485.2,62.1" fill="none" stroke="#cccccc" stroke-width="0.8" />
<rect x="1500.7" y="61.6" width="7" height="7" fill="#e0e0e0" stroke="#c4c4c4" stroke-width="1"/>
<path d="M1501.2,67.1 L1506.2,62.1" fill="none" stroke="#cccccc" stroke-width="0.8" />
<rect x="1479.7" y="72.7" width="7" height="7" fill="#e0e0e0" stroke="#c4c4c4" stroke-width="1"/>
<path d="M1480.2,78.2 L1485.2,73.2" fill="none" stroke="#cccccc" stroke-width="0.8" />
<rect x="1500.7" y="72.7" width="7" height="7" fill="#e0e0e0" stroke="#c4c4c4" stroke-width="1"/>
<path d="M1501.2,78.2 L1506.2,73.2" fill="none" stroke="#cccccc" stroke-width="0.8" />
<path d="M1487,61.5 L1491,61.5 M1496,61.5 L1500,61.5 M1487,68.5 L1491,68.5 M1496,68.5 L1500,68.5 M1487,72.2 L1491,72.2 M1496,72.2 L1500,72.2 M1487,79.7 L1491,79.7 M1496,79.7 L1500,79.7" fill="none" stroke="#d0d0d0" stroke-width="0.9" />
<path d="M1493.5,57 L1493.5,84" fill="none" stroke="#c4c4c4" stroke-width="1.1" />
<path d="M1493.5,55.3 L1496,59 L1491,59 Z M1493.5,85.5 L1496,82 L1491,82 Z" fill="#c4c4c4" stroke="none" stroke-width="1" />
<text x="1473.0" y="101.5" font-size="12" fill="#c2c2c2" textLength="41.8" lengthAdjust="spacingAndGlyphs">Schacht</text>
<path d="M1524,63.6 L1537,63.6" fill="none" stroke="#c8c8c8" stroke-width="1" />
<path d="M1523,63.6 L1525.5,61.6 L1525.5,65.6 Z M1538,63.6 L1535.5,61.6 L1535.5,65.6 Z" fill="#c8c8c8" stroke="none" stroke-width="1" />
<rect x="1528.2" y="56.3" width="4.6" height="3.8" fill="#e0e0e0" stroke="#c8c8c8" stroke-width="0.9"/><rect x="1528.2" y="67.3" width="4.6" height="3.8" fill="#e0e0e0" stroke="#c8c8c8" stroke-width="0.9"/>
<path d="M1528.2,60 L1528.2,62 M1532.8,60 L1532.8,62 M1528.2,65 L1528.2,67.3 M1532.8,65 L1532.8,67.3" fill="none" stroke="#c8c8c8" stroke-width="0.8" />
<text x="1544.4" y="68.0" font-size="12" fill="#c2c2c2" textLength="30.1" lengthAdjust="spacingAndGlyphs">Wand</text>
<path d="M1530.4,81 L1530.4,94" fill="none" stroke="#c8c8c8" stroke-width="1" />
<path d="M1530.4,80 L1532.2,82.4 L1528.6,82.4 Z M1530.4,95 L1532.2,92.6 L1528.6,92.6 Z" fill="#c8c8c8" stroke="none" stroke-width="1" />
<path d="M1523.5,81 L1528,83.5 L1528,88 L1523.5,85.5 Z M1533,86.5 L1538,89.5 L1538,94.5 L1533,91.5 Z" fill="#e2e2e2" stroke="#c8c8c8" stroke-width="0.9" />
<text x="1544.4" y="92.0" font-size="12" fill="#c2c2c2" textLength="37.2" lengthAdjust="spacingAndGlyphs">Vertikal</text>
<path d="M1526.3,118.9 L1526.3,107.4 L1537.9,107.4" fill="none" stroke="#c8c8c8" stroke-width="1" />
<path d="M1528,116.5 L1537.5,107 M1533,104.5 L1539,104.5 M1523.5,115.5 L1523.5,119.5" fill="none" stroke="#d4d4d4" stroke-width="0.9" />
<text x="1544.4" y="116.0" font-size="12" fill="#c2c2c2" textLength="33.6" lengthAdjust="spacingAndGlyphs">Gaube</text>
<text x="1486.6" y="137.7" font-size="12" fill="#2e2e2e" textLength="43.9" lengthAdjust="spacingAndGlyphs">Öffnung</text>
<path d="M1597,76.1 L1599,76.1 M1600.5,76.1 L1603.5,76.1" fill="none" stroke="#c8c8c8" stroke-width="1" />
<path d="M1600.8,73.5 L1601.8,72 L1601.8,74.5" fill="none" stroke="#c8c8c8" stroke-width="0.8" />
<path d="M1608.4,71.6 L1612.9,76.1 L1608.4,80.6 L1603.9,76.1 Z" fill="#d8d8d8" stroke="#c8c8c8" stroke-width="0.9" />
<path d="M1608.4,71 L1608.4,81 M1603.4,76.1 L1613.4,76.1" fill="none" stroke="#f4f4f4" stroke-width="0.8" />
<text x="1618.4" y="79.9" font-size="12" fill="#c2c2c2" textLength="31.4" lengthAdjust="spacingAndGlyphs">Ebene</text>
<circle cx="1599.2" cy="98.1" r="1.9" fill="none" stroke="#c8c8c8" stroke-width="1"/>
<circle cx="1599.2" cy="104.7" r="1.9" fill="none" stroke="#c8c8c8" stroke-width="1"/>
<circle cx="1604.9" cy="94.1" r="1.9" fill="none" stroke="#c8c8c8" stroke-width="1"/>
<circle cx="1610.6" cy="94.1" r="1.9" fill="none" stroke="#c8c8c8" stroke-width="1"/>
<path d="M1604.9,96 L1604.9,107.8 M1610.6,96 L1610.6,107.8 M1601.2,98.1 L1613,98.1 M1601.2,104.7 L1613,104.7" fill="none" stroke="#c8c8c8" stroke-width="1" />
<text x="1618.4" y="103.9" font-size="12" fill="#c2c2c2" textLength="31.4" lengthAdjust="spacingAndGlyphs">Raster</text>
<text x="1608.3" y="137.7" font-size="12" fill="#2e2e2e" textLength="31.3" lengthAdjust="spacingAndGlyphs">Bezug</text>
<path d="M1686.1,61.2 L1710.7,55.5 L1710.7,79.2 L1686.1,84 Z" fill="#e6e6e6" stroke="#c8c8c8" stroke-width="1" />
<path d="M1694.3,59.3 L1694.3,82.4 M1702.5,57.4 L1702.5,80.8 M1686.1,69 L1710.7,63.5 M1686.1,76.5 L1710.7,71.4" fill="none" stroke="#d2d2d2" stroke-width="1" />
<path d="M1682,68.5 L1684.5,66.5 L1704.5,63.5 L1704.5,82.5 L1686,86 L1682,83.5 Z" fill="#dedede" stroke="#c8c8c8" stroke-width="1" />
<path d="M1686,68 L1686,86 M1686,68 L1704.5,64.5 M1686,76 L1704.5,72.5 M1695,66.5 L1695,84.5" fill="none" stroke="#cfcfcf" stroke-width="0.9" />
<text x="1672.5" y="101.7" font-size="12" fill="#c2c2c2" textLength="49.1" lengthAdjust="spacingAndGlyphs">Festlegen</text>
<path d="M1693.0,107.5 L1700.0,107.5 L1696.5,111 Z" fill="#8a8a8a" stroke="none" stroke-width="1" />
<path d="M1738.2,59.5 L1750.7,56.4 L1750.7,68.2 L1738.2,71.8 Z" fill="#f0f0f0" stroke="#c8c8c8" stroke-width="1" />
<path d="M1742.4,58.5 L1742.4,70.6 M1746.6,57.4 L1746.6,69.4 M1738.2,63.6 L1750.7,60.4 M1738.2,67.7 L1750.7,64.3" fill="none" stroke="#c8c8c8" stroke-width="0.9" />
<circle cx="1750.2" cy="65.2" r="3.3" fill="#d8d8d8"/>
<path d="M1748.6,69.5 L1751.8,69.5 L1750.2,71.5 Z" fill="#d0d0d0" stroke="none" stroke-width="1" />
<text x="1759.3" y="67.7" font-size="12" fill="#c2c2c2" textLength="48.0" lengthAdjust="spacingAndGlyphs">Anzeigen</text>
<path d="M1738.4,91.5 L1742.8,82.3 L1753.7,82.3 L1749.3,91.5 Z" fill="none" stroke="#c8c8c8" stroke-width="1" />
<path d="M1741,84 L1741,80.5 M1751.5,84 L1751.5,80.5 M1736.8,91.5 L1740,91.5" fill="none" stroke="#c8c8c8" stroke-width="0.9" />
<path d="M1744.5,94.5 L1752.5,86.8" fill="none" stroke="#d2d2d2" stroke-width="3.2" />
<path d="M1743.2,95.8 L1744,93.6 L1745.6,95.2 Z" fill="#c8c8c8" stroke="none" stroke-width="1" />
<text x="1759.3" y="91.5" font-size="12" fill="#c2c2c2" textLength="76.5" lengthAdjust="spacingAndGlyphs">Referenzebene</text>
<rect x="1738.6" y="104.4" width="15" height="15.2" fill="#f4f4f4" stroke="#c8c8c8" stroke-width="1.1"/>
<rect x="1739" y="104.8" width="14.2" height="1.6" fill="#d0d0d0" />
<path d="M1742,111 L1744,109 L1750,109 L1750,115 L1748,117 L1742,117 Z" fill="#d6d6d6" stroke="none" stroke-width="1" />
<text x="1759.3" y="115.7" font-size="12" fill="#c2c2c2" textLength="34.7" lengthAdjust="spacingAndGlyphs">Viewer</text>
<text x="1717.2" y="137.7" font-size="12" fill="#2e2e2e" textLength="68.7" lengthAdjust="spacingAndGlyphs">Arbeitsebene</text>
<rect x="8" y="171" width="1920" height="2" fill="#bdbdbd" />
<rect x="8" y="173" width="1920" height="20" fill="#cbcbcb" />
<rect x="8" y="193" width="1920" height="2" fill="#ffffff" />
<rect x="142" y="173" width="203" height="20" fill="#fafafa" />
<path d="M12.5,177.5 L23,177.5 L27.5,182 L27.5,188.5 L12.5,188.5 Z" fill="#e8e8e8" stroke="#9a9a9a" stroke-width="1" />
<text x="35.3" y="187.9" font-size="12" fill="#444444" textLength="82.7" lengthAdjust="spacingAndGlyphs">--- - Projektinfo</text>
<path d="M147.5,189 L147.5,182.5 L153,177 L158.5,177 L162,181 L162,189 Z" fill="#e8e8e8" stroke="#555" stroke-width="1.1" />
<path d="M147.5,182.5 L153,177 L158.5,182.5 L158.5,189 M158.5,182.5 L162,181" fill="none" stroke="#555" stroke-width="1.1" />
<rect x="151.5" y="184.5" width="3" height="4.5" fill="#e0a800" />
<text x="170.1" y="187.9" font-size="12" fill="#2a2a2a" font-weight="bold" textLength="151.6" lengthAdjust="spacingAndGlyphs">{3d -gerhard.pawlat4PT58}</text>
<path d="M330.5,179.5 L339,188 M339,179.5 L330.5,188" fill="none" stroke="#555" stroke-width="1.5" />
<path d="M1913,180 L1922,180 M1913,183 L1922,183 L1917.5,187 Z" fill="#777" stroke="#777" stroke-width="1" />
<rect x="1911" y="195" width="17" height="913" fill="#e6e6e6" />
<rect x="1911" y="195" width="17" height="16" fill="#e0e0e0" />
<path d="M1915,206 L1919.5,201 L1924,206" fill="none" stroke="#777" stroke-width="1.5" />
<path d="M1915,1097 L1919.5,1102 L1924,1097" fill="none" stroke="#777" stroke-width="1.5" />
<rect x="1914.5" y="643" width="9" height="19" rx="4" fill="#8a8a8a"/>
<rect x="8" y="1108" width="1920" height="18" fill="#f4f4f4" />
<rect x="477" y="1109" width="16" height="17" fill="#e6e6e6" />
<path d="M488,1113 L483,1117.5 L488,1122" fill="none" stroke="#777" stroke-width="1.5" />
<rect x="493" y="1109" width="1418" height="17" fill="#e8e8e8" />
<rect x="1186.5" y="1113.5" width="16" height="8" rx="4" fill="#909090"/>
<rect x="1894" y="1109" width="17" height="17" fill="#e4e4e4" />
<path d="M1900,1113 L1905,1117.5 L1900,1122" fill="none" stroke="#777" stroke-width="1.5" />
<rect x="1911" y="1109" width="17" height="17" fill="#f0f0f0" />
<path d="M1919,1121 L1920,1121 M1923,1118 L1924,1118 M1923,1121 L1924,1121" fill="none" stroke="#555" stroke-width="1.5" />
<text x="33.4" y="1121.4" font-size="10.5" fill="#222" textLength="32.9" lengthAdjust="spacingAndGlyphs">1 : 100</text>
<rect x="92.6" y="1112.4" width="15" height="11.6" fill="#f2f2f2" stroke="#a8a8a8" stroke-width="1.1"/>
<rect x="93.4" y="1113.2" width="2" height="2" fill="#cfcfcf" />
<rect x="93.4" y="1117.2" width="2" height="2" fill="#cfcfcf" />
<rect x="93.4" y="1121.2" width="2" height="2" fill="#cfcfcf" />
<rect x="95.4" y="1115.2" width="2" height="2" fill="#cfcfcf" />
<rect x="95.4" y="1119.2" width="2" height="2" fill="#cfcfcf" />
<rect x="97.4" y="1113.2" width="2" height="2" fill="#cfcfcf" />
<rect x="97.4" y="1117.2" width="2" height="2" fill="#cfcfcf" />
<rect x="97.4" y="1121.2" width="2" height="2" fill="#cfcfcf" />
<rect x="99.4" y="1115.2" width="2" height="2" fill="#cfcfcf" />
<rect x="99.4" y="1119.2" width="2" height="2" fill="#cfcfcf" />
<rect x="101.4" y="1113.2" width="2" height="2" fill="#cfcfcf" />
<rect x="101.4" y="1117.2" width="2" height="2" fill="#cfcfcf" />
<rect x="101.4" y="1121.2" width="2" height="2" fill="#cfcfcf" />
<rect x="103.4" y="1115.2" width="2" height="2" fill="#cfcfcf" />
<rect x="103.4" y="1119.2" width="2" height="2" fill="#cfcfcf" />
<rect x="105.4" y="1113.2" width="2" height="2" fill="#cfcfcf" />
<rect x="105.4" y="1117.2" width="2" height="2" fill="#cfcfcf" />
<rect x="105.4" y="1121.2" width="2" height="2" fill="#cfcfcf" />
<path d="M119.4,1115.2 L123,1111.6 L132.6,1111.6 L132.6,1120.8 L129,1124.4 L119.4,1124.4 Z" fill="#e4e4e4" stroke="#a8a8a8" stroke-width="1" />
<path d="M119.4,1115.2 L129,1115.2 L132.6,1111.6 M129,1115.2 L129,1124.4" fill="none" stroke="#a8a8a8" stroke-width="1" />
<rect x="119.8" y="1118.6" width="8.8" height="2.4" fill="#cdcdcd" />
<path d="M129,1115.2 L132.6,1111.6 L132.6,1120.8 L129,1124.4 Z" fill="#d6d6d6" stroke="none" stroke-width="1" />
<circle cx="152" cy="1116" r="3.5" fill="#b8b8b8"/>
<path d="M146,1116 L158,1116 M152,1110 L152,1122 M148,1112 L156,1120 M156,1112 L148,1120" fill="none" stroke="#b8b8b8" stroke-width="1.2" />
<rect x="154" y="1116" width="6" height="6" fill="#c4c4c4" />
<rect x="156" y="1123" width="3" height="2" fill="#c4c4c4" />
<circle cx="177" cy="1115.5" r="5" fill="#e8e8e8" stroke="#a8a8a8" stroke-width="1.2"/>
<rect x="170" y="1122" width="10" height="2.5" fill="#555" />
<rect x="181" y="1116" width="6" height="6" fill="#c4c4c4" />
<path d="M196,1113 L204,1113 L208,1116 L204,1120 L200,1120 Z" fill="none" stroke="#aaa" stroke-width="1.2" />
<rect x="206" y="1116" width="6" height="6" fill="#c4c4c4" />
<rect x="208" y="1123" width="2" height="2" fill="#c4c4c4" />
<path d="M222,1118 L224,1118 M227,1112 L227,1124 L238,1124 M231,1118 L238,1118 M233,1120 L238,1125 M238,1120 L233,1125" fill="none" stroke="#a0a0a0" stroke-width="1.3" />
<path d="M248,1118 L250,1118 M253,1112 L253,1124 M253,1118 L258,1118" fill="none" stroke="#a0a0a0" stroke-width="1.3" />
<circle cx="261" cy="1119" r="3" fill="#c4c4c4"/>
<rect x="259" y="1122" width="3" height="3" fill="#b0b0b0" />
<path d="M274,1116 L281.5,1110 L289,1116 L289,1124 L274,1124 Z" fill="none" stroke="#999" stroke-width="1.3" />
<rect x="282" y="1119" width="8" height="6" fill="#d0d0d0" />
<rect x="300" y="1111" width="16" height="14" rx="1" fill="#444"/>
<rect x="303" y="1116" width="10" height="5" fill="#888" />
<circle cx="334" cy="1115" r="4" fill="#cfcfcf"/>
<rect x="332" y="1120" width="4" height="4" fill="#c0c0c0" />
<circle cx="355" cy="1114" r="3" fill="#c8c8c8"/><circle cx="362" cy="1113" r="3" fill="#c8c8c8"/>
<path d="M357,1117 L366,1124 M366,1117 L357,1124" fill="none" stroke="#b0b0b0" stroke-width="1.6" />
<rect x="380.5" y="1112.5" width="10" height="8" fill="none" stroke="#a8a8a8" stroke-width="1.2"/>
<path d="M386,1124 L392,1124 L392,1118" fill="none" stroke="#a8a8a8" stroke-width="1.2" stroke-dasharray="2 1.5"/>
<path d="M404,1112 L404,1124 M408,1112 L408,1124 M412,1113 L412,1124 M404,1116 L416,1116 M404,1120 L412,1120" fill="none" stroke="#a0a0a0" stroke-width="1.3" />
<rect x="414" y="1111" width="6" height="4" fill="#cfcfcf" />
<rect x="413" y="1118" width="6" height="5" fill="#c4c4c4" />
<path d="M432,1117 L437,1114 L444,1114 L444,1121 L439,1124 L432,1124 Z" fill="none" stroke="#a8a8a8" stroke-width="1.3" />
<path d="M456,1124 L456,1111 M456,1113 L472,1113 M472,1111 L472,1116 M456,1120 L466,1120" fill="none" stroke="#999" stroke-width="1.3" />
<circle cx="470" cy="1120" r="3" fill="#c4c4c4"/>
<rect x="8" y="1126" width="1920" height="2" fill="#ffffff" />
<rect x="8" y="1128" width="1920" height="24" fill="#f4f4f4" />
<rect x="8" y="1152" width="1920" height="1" fill="#c8c8c8" />
<text x="9.0" y="1146.0" font-size="12" fill="#222" textLength="310.5" lengthAdjust="spacingAndGlyphs">320_Heizung_Kälte : Rohre : Rohrtypen : 300_Metallverbund</text>
<path d="M818,1135 L824,1133 L824,1147 L818,1147 Z M825,1135 L830,1134 L830,1145 L833,1145" fill="#b0b0b0" stroke="#999" stroke-width="1" />
<text x="844.3" y="1146.6" font-size="12" fill="#ababab" textLength="183.0" lengthAdjust="spacingAndGlyphs">320_Heizung_Kälte (nicht bearbeitl</text>
<path d="M1036,1141 L1039.5,1144.5 L1043,1141" fill="none" stroke="#bbb" stroke-width="1.3" />
<path d="M1056,1146 L1056,1142 L1062,1142 L1062,1146 Z M1063,1133 L1070,1133 L1070,1138 L1065,1138 L1063,1141" fill="none" stroke="#a8a8a8" stroke-width="1.2" />
<text x="1072.0" y="1146.6" font-size="12" fill="#a8a8a8" textLength="10.0" lengthAdjust="spacingAndGlyphs">:0</text>
<path d="M1108,1135 L1115,1131 L1122,1135 L1122,1143 L1115,1147 L1108,1143 Z" fill="#dcdcdc" stroke="#b0b0b0" stroke-width="1.2" />
<rect x="1145.5" y="1132.5" width="14" height="14" fill="none" stroke="#888" stroke-width="1.2"/>
<path d="M1148,1136 L1157,1136 M1148,1139.5 L1157,1139.5 M1148,1143 L1157,1143" fill="none" stroke="#888" stroke-width="1" />
<rect x="1174.5" y="1132.5" width="13" height="12" fill="none" stroke="#888" stroke-width="1.2"/>
<path d="M1177,1136 L1185,1136 M1177,1139.5 L1185,1139.5 M1172,1147 L1178,1147" fill="none" stroke="#888" stroke-width="1" />
<text x="1198.2" y="1147.0" font-size="12" fill="#b3b3b3" textLength="64.8" lengthAdjust="spacingAndGlyphs">Basisvorlage</text>
<path d="M1390,1141 L1393.5,1144.5 L1397,1141" fill="none" stroke="#bbb" stroke-width="1.3" />
<path d="M1681,1137 L1681,1148 L1684,1145 L1687,1149 L1688,1148 L1686,1144 L1689,1144 Z" fill="#fff" stroke="#999" stroke-width="1" />
<path d="M1707,1137 L1707,1148 L1710,1145 L1713,1149 L1714,1148 L1712,1144 L1715,1144 Z" fill="#fff" stroke="#999" stroke-width="1" />
<path d="M1733,1137 L1733,1148 L1736,1145 L1739,1149 L1740,1148 L1738,1144 L1741,1144 Z" fill="#fff" stroke="#999" stroke-width="1" />
<path d="M1761,1137 L1761,1148 L1764,1145 L1767,1149 L1768,1148 L1766,1144 L1769,1144 Z" fill="#fff" stroke="#999" stroke-width="1" />
<path d="M1785,1137 L1785,1148 L1788,1145 L1791,1149 L1792,1148 L1790,1144 L1793,1144 Z" fill="#fff" stroke="#999" stroke-width="1" />
<path d="M1676,1133 L1684,1133 L1684,1137 L1676,1137 Z M1686,1133 L1691,1138 M1691,1133 L1686,1138" fill="none" stroke="#aaa" stroke-width="1.2" />
<path d="M1702,1137 L1716,1133 L1712,1140 L1702,1140 Z" fill="#c8c8c8" stroke="none" stroke-width="1" />
<path d="M1728,1133 L1734,1133 L1734,1136 L1731,1136 L1731,1142" fill="none" stroke="#aaa" stroke-width="1.2" />
<path d="M1756,1135 L1762,1132 L1762,1148 L1756,1148 Z" fill="#c8c8c8" stroke="none" stroke-width="1" />
<path d="M1780,1140 L1790,1140 M1785,1132 L1785,1146" fill="none" stroke="#999" stroke-width="1.2" />
<circle cx="1812.5" cy="1139.5" r="6.5" fill="none" stroke="#999" stroke-width="2" stroke-dasharray="2.5 2"/>
<path d="M1829.5,1133.5 L1845,1133.5 L1839,1141 L1839,1148 L1836,1148 L1836,1141 Z" fill="#d0d0d0" stroke="#8a8a8a" stroke-width="1.2" />
<text x="1846.0" y="1147.0" font-size="12" fill="#1a5ab0" textLength="9.5" lengthAdjust="spacingAndGlyphs">:0</text>
<rect x="28.2" y="209.8" width="356.5" height="56" rx="5" fill="#ffffff" filter="url(#sh)"/>
<path d="M33,210 L120,210 L120,214.7 L29,214.7 Q29.5,211 33,210 Z" fill="url(#lg63)" stroke="none" stroke-width="1" />
<text x="49.4" y="246.1" font-size="17.5" fill="#3a3a3a" textLength="319.0" lengthAdjust="spacingAndGlyphs">Wählen Sie das umzuleitende Segment...</text>
<path d="M364,221 L375,231.5 M375,221 L364,231.5" fill="none" stroke="#333" stroke-width="1.4" />
<path d="M880.3,751.2 L880.3,830.5 L897,814.1 L906.6,833.5 L919.5,827.5 L910.9,806.4 L935.9,806.4 Z" fill="#000" stroke="none" stroke-width="1" />
<path d="M884,760 L884,820 L898.5,806 L908.5,826 L914,823.5 L904.5,802.5 L926,802.5 Z" fill="#ee1c24" stroke="none" stroke-width="1" /></svg></body></html>
